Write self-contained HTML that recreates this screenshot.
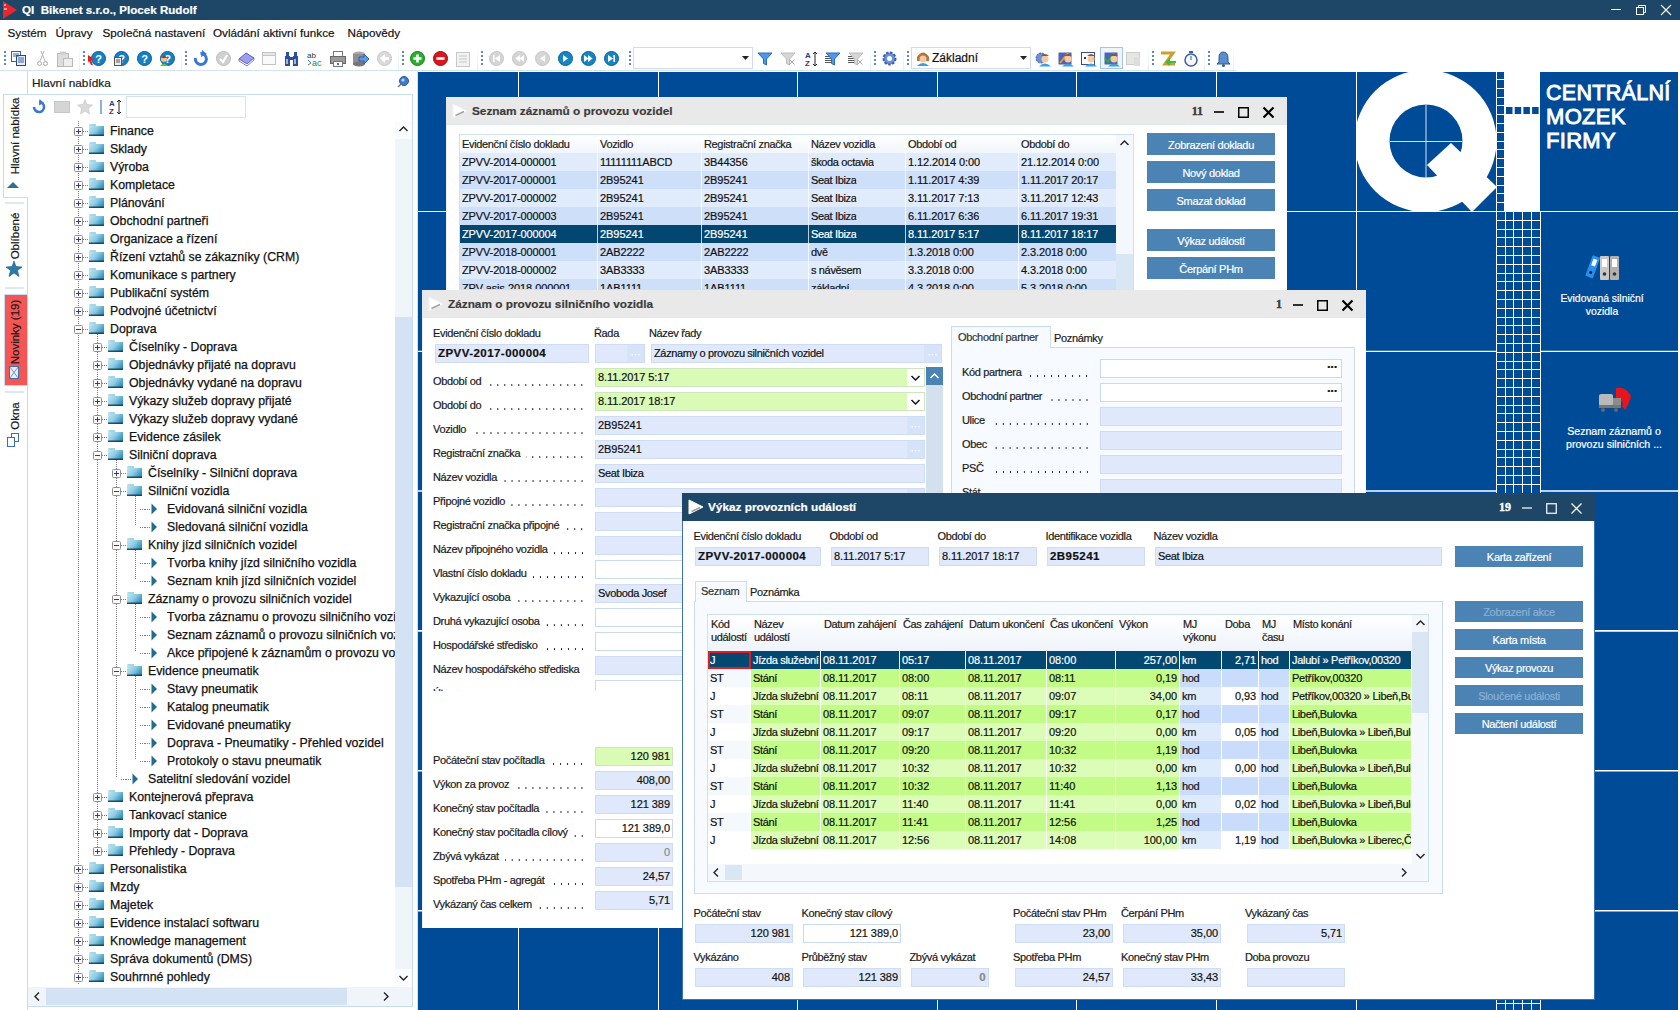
<!DOCTYPE html><html><head><meta charset="utf-8"><style>
*{box-sizing:border-box}
body{margin:0;width:1680px;height:1010px;position:relative;overflow:hidden;font-family:"Liberation Sans",sans-serif;background:#fff;color:#000;-webkit-text-stroke:0.2px currentColor}
.a{position:absolute}
.t{position:absolute;white-space:nowrap;line-height:14px}
.w{font-size:11px;letter-spacing:-0.35px;color:#1a1a1a}
svg{position:absolute;overflow:visible}
</style></head><body><div class="a" style="left:0px;top:0px;width:1680px;height:20px;background:#1e4667"></div>
<svg style="left:0;top:0" width="20" height="20"><path d="M3 1 L17 10 L3 19 Z" fill="#e8262c"/><path d="M4 5 h2 M4 9 h3" stroke="#fff" stroke-width="1"/></svg>
<div class="t" style="left:22px;top:3px;font-size:11.6px;font-weight:bold;color:#fff">QI&nbsp; Bikenet s.r.o., Plocek Rudolf</div>
<svg style="left:1600px;top:0" width="80" height="20"><path d="M11 9.5 h10" stroke="#fff" stroke-width="1"/><rect x="36.5" y="7.5" width="7" height="7" fill="none" stroke="#fff"/><path d="M38.5 7.5 v-2 h7 v7 h-2" fill="none" stroke="#fff"/><path d="M61 5 L71 15 M71 5 L61 15" stroke="#fff" stroke-width="1.1"/></svg>
<div class="t" style="left:7.5px;top:25.5px;font-size:11.7px;color:#111">Systém</div>
<div class="t" style="left:55.5px;top:25.5px;font-size:11.7px;color:#111">Úpravy</div>
<div class="t" style="left:102.5px;top:25.5px;font-size:11.7px;color:#111">Společná nastavení</div>
<div class="t" style="left:213px;top:25.5px;font-size:11.7px;color:#111">Ovládání aktivní funkce</div>
<div class="t" style="left:347.5px;top:25.5px;font-size:11.7px;color:#111">Nápovědy</div>
<div class="a" style="left:0px;top:70px;width:1236px;height:1px;background:#d3e2f5"></div>
<svg style="left:4px;top:51px" width="3" height="16"><rect x="0" y="0" width="2" height="2" fill="#5f86c1"/><rect x="0" y="4" width="2" height="2" fill="#5f86c1"/><rect x="0" y="8" width="2" height="2" fill="#5f86c1"/><rect x="0" y="12" width="2" height="2" fill="#5f86c1"/></svg>
<svg style="left:83px;top:51px" width="3" height="16"><rect x="0" y="0" width="2" height="2" fill="#5f86c1"/><rect x="0" y="4" width="2" height="2" fill="#5f86c1"/><rect x="0" y="8" width="2" height="2" fill="#5f86c1"/><rect x="0" y="12" width="2" height="2" fill="#5f86c1"/></svg>
<svg style="left:185px;top:51px" width="3" height="16"><rect x="0" y="0" width="2" height="2" fill="#5f86c1"/><rect x="0" y="4" width="2" height="2" fill="#5f86c1"/><rect x="0" y="8" width="2" height="2" fill="#5f86c1"/><rect x="0" y="12" width="2" height="2" fill="#5f86c1"/></svg>
<svg style="left:402px;top:51px" width="3" height="16"><rect x="0" y="0" width="2" height="2" fill="#5f86c1"/><rect x="0" y="4" width="2" height="2" fill="#5f86c1"/><rect x="0" y="8" width="2" height="2" fill="#5f86c1"/><rect x="0" y="12" width="2" height="2" fill="#5f86c1"/></svg>
<svg style="left:481px;top:51px" width="3" height="16"><rect x="0" y="0" width="2" height="2" fill="#5f86c1"/><rect x="0" y="4" width="2" height="2" fill="#5f86c1"/><rect x="0" y="8" width="2" height="2" fill="#5f86c1"/><rect x="0" y="12" width="2" height="2" fill="#5f86c1"/></svg>
<svg style="left:629px;top:51px" width="3" height="16"><rect x="0" y="0" width="2" height="2" fill="#5f86c1"/><rect x="0" y="4" width="2" height="2" fill="#5f86c1"/><rect x="0" y="8" width="2" height="2" fill="#5f86c1"/><rect x="0" y="12" width="2" height="2" fill="#5f86c1"/></svg>
<svg style="left:874px;top:51px" width="3" height="16"><rect x="0" y="0" width="2" height="2" fill="#5f86c1"/><rect x="0" y="4" width="2" height="2" fill="#5f86c1"/><rect x="0" y="8" width="2" height="2" fill="#5f86c1"/><rect x="0" y="12" width="2" height="2" fill="#5f86c1"/></svg>
<svg style="left:907px;top:51px" width="3" height="16"><rect x="0" y="0" width="2" height="2" fill="#5f86c1"/><rect x="0" y="4" width="2" height="2" fill="#5f86c1"/><rect x="0" y="8" width="2" height="2" fill="#5f86c1"/><rect x="0" y="12" width="2" height="2" fill="#5f86c1"/></svg>
<svg style="left:1152px;top:51px" width="3" height="16"><rect x="0" y="0" width="2" height="2" fill="#5f86c1"/><rect x="0" y="4" width="2" height="2" fill="#5f86c1"/><rect x="0" y="8" width="2" height="2" fill="#5f86c1"/><rect x="0" y="12" width="2" height="2" fill="#5f86c1"/></svg>
<svg style="left:1208px;top:51px" width="3" height="16"><rect x="0" y="0" width="2" height="2" fill="#5f86c1"/><rect x="0" y="4" width="2" height="2" fill="#5f86c1"/><rect x="0" y="8" width="2" height="2" fill="#5f86c1"/><rect x="0" y="12" width="2" height="2" fill="#5f86c1"/></svg>
<div class="a" style="left:79px;top:46px;width:1px;height:24px;background:linear-gradient(#fff,#e3ecf8)"></div>
<div class="a" style="left:181px;top:46px;width:1px;height:24px;background:linear-gradient(#fff,#e3ecf8)"></div>
<div class="a" style="left:398px;top:46px;width:1px;height:24px;background:linear-gradient(#fff,#e3ecf8)"></div>
<div class="a" style="left:477px;top:46px;width:1px;height:24px;background:linear-gradient(#fff,#e3ecf8)"></div>
<div class="a" style="left:625px;top:46px;width:1px;height:24px;background:linear-gradient(#fff,#e3ecf8)"></div>
<div class="a" style="left:870px;top:46px;width:1px;height:24px;background:linear-gradient(#fff,#e3ecf8)"></div>
<div class="a" style="left:903px;top:46px;width:1px;height:24px;background:linear-gradient(#fff,#e3ecf8)"></div>
<div class="a" style="left:1148px;top:46px;width:1px;height:24px;background:linear-gradient(#fff,#e3ecf8)"></div>
<div class="a" style="left:1204px;top:46px;width:1px;height:24px;background:linear-gradient(#fff,#e3ecf8)"></div>
<div class="a" style="left:1233px;top:46px;width:1px;height:24px;background:linear-gradient(#fff,#e3ecf8)"></div>
<svg style="left:11px;top:51px" width="16" height="16" viewBox="0 0 16 16"><rect x="0.5" y="0.5" width="9" height="10" fill="#fff" stroke="#3a5fa8"/><rect x="5.5" y="4.5" width="9" height="10" fill="#e8eefb" stroke="#23468f"/><path d="M7 7h6M7 9h6M7 11h6M2 3h6M2 5h6" stroke="#3a5fa8"/></svg>
<svg style="left:37px;top:51px" width="12" height="16" viewBox="0 0 12 16"><circle cx="2.5" cy="12.5" r="2" fill="none" stroke="#aaa"/><circle cx="8.5" cy="12.5" r="2" fill="none" stroke="#aaa"/><path d="M3 10 L7 0 M8 10 L4 0" stroke="#b5b5b5"/></svg>
<svg style="left:57px;top:51px" width="16" height="16" viewBox="0 0 16 16"><rect x="0.5" y="2.5" width="11" height="13" fill="#ddd" stroke="#bbb"/><rect x="3" y="0.5" width="6" height="3" fill="#ccc"/><rect x="6.5" y="7.5" width="9" height="8" fill="#eee" stroke="#bbb"/></svg>
<svg style="left:91px;top:51px" width="16" height="16" viewBox="0 0 16 16"><circle cx="7.5" cy="7.5" r="7" fill="#1580c4" stroke="#0d5b9a" stroke-width="1"/><text x="7.5" y="12" font-size="11" font-weight="bold" fill="#fff" text-anchor="middle" font-family="Liberation Sans">?</text></svg>
<svg style="left:114px;top:51px" width="16" height="16" viewBox="0 0 16 16"><circle cx="7.5" cy="7.5" r="7" fill="#1580c4" stroke="#0d5b9a" stroke-width="1"/><text x="7.5" y="12" font-size="11" font-weight="bold" fill="#fff" text-anchor="middle" font-family="Liberation Sans">?</text></svg>
<svg style="left:137px;top:51px" width="16" height="16" viewBox="0 0 16 16"><circle cx="7.5" cy="7.5" r="7" fill="#1580c4" stroke="#0d5b9a" stroke-width="1"/><text x="7.5" y="12" font-size="11" font-weight="bold" fill="#fff" text-anchor="middle" font-family="Liberation Sans">?</text></svg>
<svg style="left:160px;top:51px" width="16" height="16" viewBox="0 0 16 16"><circle cx="7.5" cy="7.5" r="7" fill="#1580c4" stroke="#0d5b9a" stroke-width="1"/><text x="7.5" y="12" font-size="11" font-weight="bold" fill="#fff" text-anchor="middle" font-family="Liberation Sans">?</text></svg>
<svg style="left:88px;top:51px" width="8" height="16" viewBox="0 0 8 16"><path d="M0 4 L6 8 L3 9 L5 14 L3 14 L1 10 L0 12Z" fill="#e0201b"/></svg>
<svg style="left:114px;top:51px" width="9" height="16" viewBox="0 0 9 16"><rect x="0.5" y="6.5" width="7" height="8" fill="#eee" stroke="#555"/><path d="M2 9h4M2 11h4" stroke="#555"/></svg>
<svg style="left:160px;top:51px" width="9" height="16" viewBox="0 0 9 16"><circle cx="4" cy="8" r="3" fill="#f3c08e"/><path d="M0 15 q4 -5 8 0z" fill="#4ec24a"/><path d="M1 7 q3 -5 6 0" fill="#7a4a22"/></svg>
<svg style="left:193px;top:51px" width="16" height="16" viewBox="0 0 16 16"><path d="M7.5 2.5 A5.5 5.5 0 1 1 2.5 7" fill="none" stroke="#3a78d4" stroke-width="3"/><path d="M9 -1 L14 3 L8 6Z" fill="#3a78d4"/></svg>
<svg style="left:216px;top:51px" width="16" height="16" viewBox="0 0 16 16"><circle cx="7.5" cy="7.5" r="7" fill="#d0d0d0" stroke="#bdbdbd" stroke-width="1"/><path d="M4 8 L7 11 L11 4" fill="none" stroke="#fff" stroke-width="2"/></svg>
<svg style="left:238px;top:51px" width="17" height="16" viewBox="0 0 17 16"><path d="M1 8 L8 2 L16 7 L9 13Z" fill="#9a9ef0" stroke="#5c60b8"/><path d="M1 8 L1 10 L9 15 L16 9 L16 7 L9 13Z" fill="#fff" stroke="#5c60b8" stroke-width="0.8"/></svg>
<svg style="left:262px;top:51px" width="16" height="16" viewBox="0 0 16 16"><rect x="0.5" y="1.5" width="13" height="12" fill="#fafafa" stroke="#c4c4c4"/><rect x="0.5" y="1.5" width="13" height="3" fill="#e6e6e6" stroke="#c4c4c4"/></svg>
<svg style="left:284px;top:51px" width="16" height="16" viewBox="0 0 16 16"><rect x="1" y="5" width="5" height="10" fill="#2b4f9e"/><rect x="9" y="5" width="5" height="10" fill="#2b4f9e"/><rect x="2" y="1" width="3" height="5" fill="#2b4f9e"/><rect x="10" y="1" width="3" height="5" fill="#2b4f9e"/><rect x="5" y="6" width="5" height="3" fill="#2b4f9e"/><rect x="2" y="8" width="2" height="5" fill="#9fb6e4"/><rect x="10" y="8" width="2" height="5" fill="#9fb6e4"/></svg>
<svg style="left:307px;top:51px" width="17" height="16" viewBox="0 0 17 16"><text x="0" y="7" font-size="8" fill="#333" font-family="Liberation Sans">ab</text><text x="5" y="15" font-size="9" fill="#2a8a2a" font-family="Liberation Sans">ac</text><path d="M1 9 L4 12 L1 14" fill="none" stroke="#3a78d4"/></svg>
<svg style="left:330px;top:51px" width="16" height="16" viewBox="0 0 16 16"><rect x="3.5" y="0.5" width="9" height="5" fill="#fff" stroke="#777"/><rect x="0.5" y="5.5" width="15" height="7" fill="#9a9a9a" stroke="#666"/><rect x="3.5" y="10.5" width="9" height="5" fill="#fff" stroke="#777"/><rect x="7" y="12" width="2" height="2" fill="#3a78d4"/></svg>
<svg style="left:353px;top:51px" width="17" height="16" viewBox="0 0 17 16"><ellipse cx="6" cy="3" rx="6" ry="2.5" fill="#aaa"/><rect x="0" y="3" width="12" height="10" fill="#8f8f8f"/><ellipse cx="6" cy="13" rx="6" ry="2.5" fill="#777"/><path d="M6 6 h5 v-3 l5 5 l-5 5 v-3 h-5z" fill="#5d9ae8" stroke="#2c5fb0"/></svg>
<svg style="left:377px;top:51px" width="16" height="16" viewBox="0 0 16 16"><circle cx="7.5" cy="7.5" r="7" fill="#dadada" stroke="#c8c8c8" stroke-width="1"/><path d="M3 7.5 L8 3 V6 H12 V9 H8 V12Z" fill="#fff"/></svg>
<svg style="left:410px;top:51px" width="16" height="16" viewBox="0 0 16 16"><circle cx="7.5" cy="7.5" r="7" fill="#27b12c" stroke="#12801a" stroke-width="1"/><path d="M7.5 3.5v8M3.5 7.5h8" stroke="#fff" stroke-width="2.6"/></svg>
<svg style="left:433px;top:51px" width="16" height="16" viewBox="0 0 16 16"><circle cx="7.5" cy="7.5" r="7" fill="#d8161b" stroke="#9b0d10" stroke-width="1"/><path d="M3.5 7.5h8" stroke="#fff" stroke-width="2.6"/></svg>
<svg style="left:455px;top:51px" width="16" height="16" viewBox="0 0 16 16"><rect x="1.5" y="1.5" width="13" height="14" fill="#f2f2f2" stroke="#c8c8c8"/><path d="M4 5h8M4 8h8M4 11h8" stroke="#c8c8c8"/></svg>
<svg style="left:489px;top:51px" width="16" height="16" viewBox="0 0 16 16"><circle cx="7.5" cy="7.5" r="7" fill="#d5d5d5" stroke="#c6c6c6" stroke-width="1"/><rect x="4" y="4" width="1.6" height="7" fill="#fff"/><path d="M11 4 L6 7.5 L11 11Z" fill="#fff"/></svg>
<svg style="left:512px;top:51px" width="16" height="16" viewBox="0 0 16 16"><circle cx="7.5" cy="7.5" r="7" fill="#d5d5d5" stroke="#c6c6c6" stroke-width="1"/><path d="M8 4 L3.5 7.5 L8 11Z M12 4 L7.5 7.5 L12 11Z" fill="#fff"/></svg>
<svg style="left:535px;top:51px" width="16" height="16" viewBox="0 0 16 16"><circle cx="7.5" cy="7.5" r="7" fill="#d5d5d5" stroke="#c6c6c6" stroke-width="1"/><path d="M10 4 L5 7.5 L10 11Z" fill="#fff"/></svg>
<svg style="left:558px;top:51px" width="16" height="16" viewBox="0 0 16 16"><circle cx="7.5" cy="7.5" r="7" fill="#1486c6" stroke="#0b5d97" stroke-width="1"/><path d="M5 4 L10 7.5 L5 11Z" fill="#fff"/></svg>
<svg style="left:581px;top:51px" width="16" height="16" viewBox="0 0 16 16"><circle cx="7.5" cy="7.5" r="7" fill="#1486c6" stroke="#0b5d97" stroke-width="1"/><path d="M3 4 L7.5 7.5 L3 11Z M7 4 L11.5 7.5 L7 11Z" fill="#fff"/></svg>
<svg style="left:604px;top:51px" width="16" height="16" viewBox="0 0 16 16"><circle cx="7.5" cy="7.5" r="7" fill="#1486c6" stroke="#0b5d97" stroke-width="1"/><path d="M4 4 L9 7.5 L4 11Z" fill="#fff"/><rect x="9.4" y="4" width="1.6" height="7" fill="#fff"/></svg>
<div class="a" style="left:633px;top:47px;width:120px;height:22px;border:1px solid #cfdcef;background:#fff"></div>
<svg style="left:742px;top:56px" width="8" height="5" viewBox="0 0 8 5"><path d="M0 0 h7 l-3.5 4z" fill="#222"/></svg>
<svg style="left:757px;top:51px" width="16" height="16" viewBox="0 0 16 16"><path d="M1 2 H15 L9.5 8 V14 L6.5 12.5 V8Z" fill="#4f97e6" stroke="#2a6cc0"/></svg>
<svg style="left:780px;top:51px" width="16" height="16" viewBox="0 0 16 16"><path d="M1 2 H15 L9.5 8 V14 L6.5 12.5 V8Z" fill="#d6d6d6" stroke="#bbb"/></svg>
<svg style="left:789px;top:59px" width="7" height="7" viewBox="0 0 7 7"><path d="M0.5 0.5 L5.5 5.5 M5.5 0.5 L0.5 5.5" stroke="#aaa"/></svg>
<svg style="left:805px;top:51px" width="13" height="16" viewBox="0 0 13 16"><text x="0" y="7" font-size="8" font-weight="bold" fill="#1c3f8e" font-family="Liberation Sans">A</text><text x="0" y="15" font-size="8" font-weight="bold" fill="#8b1a1a" font-family="Liberation Sans">Z</text><path d="M10 1 v14 M8 3 l2 -2 l2 2 M8 13 l2 2 l2 -2" fill="none" stroke="#222"/></svg>
<svg style="left:825px;top:51px" width="16" height="16" viewBox="0 0 16 16"><path d="M0 5.5h6M0 7.5h6M0 9.5h6M0 11.5h6" stroke="#555"/><path d="M1 2 H15 L9.5 8 V14 L6.5 12.5 V8Z" fill="#4f97e6" stroke="#2a6cc0"/></svg>
<svg style="left:848px;top:51px" width="16" height="16" viewBox="0 0 16 16"><path d="M0 5.5h6M0 7.5h6M0 9.5h6M0 11.5h6" stroke="#555"/><path d="M1 2 H15 L9.5 8 V14 L6.5 12.5 V8Z" fill="#d6d6d6" stroke="#bbb"/></svg>
<svg style="left:857px;top:59px" width="7" height="7" viewBox="0 0 7 7"><path d="M0.5 0.5 L5.5 5.5 M5.5 0.5 L0.5 5.5" stroke="#aaa"/></svg>
<svg style="left:882px;top:51px" width="16" height="16" viewBox="0 0 16 16"><circle cx="7.5" cy="7.5" r="6" fill="#6b8fd8" stroke="#3a5fa8" stroke-width="2" stroke-dasharray="2.5 1.5"/><circle cx="7.5" cy="7.5" r="2.5" fill="#fff"/></svg>
<div class="a" style="left:911px;top:47px;width:120px;height:22px;border:1px solid #cfdcef;background:#fff"></div>
<svg style="left:915px;top:51px" width="16" height="16" viewBox="0 0 16 16"><path d="M2 6 q6 -9 12 0 v4 h-12z" fill="#b0743d"/><circle cx="8" cy="8" r="3.5" fill="#f6c99c"/><path d="M2 15 q6 -6 12 0z" fill="#3aa0e0"/></svg>
<div class="t" style="left:932px;top:51px;font-size:12px;color:#111">Základní</div>
<svg style="left:1020px;top:56px" width="8" height="5" viewBox="0 0 8 5"><path d="M0 0 h7 l-3.5 4z" fill="#222"/></svg>
<svg style="left:1035px;top:51px" width="17" height="16" viewBox="0 0 17 16"><circle cx="6" cy="7" r="5" fill="#6b8fd8" stroke="#3a5fa8" stroke-dasharray="2 1"/><circle cx="10" cy="8" r="3.5" fill="#f6c99c"/><path d="M6 5 q4 -4 8 0" fill="#8a5a2a"/><path d="M4 15.5 q6 -6 12 0z" fill="#3aa0e0"/></svg>
<svg style="left:1058px;top:51px" width="17" height="16" viewBox="0 0 17 16"><rect x="0.5" y="1.5" width="13" height="12" fill="#5060c0"/><path d="M2 12 L10 2" stroke="#e0a020" stroke-width="2"/><circle cx="10" cy="8" r="3.5" fill="#f6c99c"/><path d="M6 5 q4 -4 8 0" fill="#8a5a2a"/><path d="M4 15.5 q6 -6 12 0z" fill="#3aa0e0"/></svg>
<svg style="left:1081px;top:51px" width="17" height="16" viewBox="0 0 17 16"><rect x="0.5" y="1.5" width="13" height="12" fill="#fff" stroke="#3a4a9a"/><rect x="3" y="6" width="2" height="2" fill="#333"/><circle cx="10" cy="8" r="3.5" fill="#f6c99c"/><path d="M6 5 q4 -4 8 0" fill="#8a5a2a"/><path d="M4 15.5 q6 -6 12 0z" fill="#3aa0e0"/></svg>
<div class="a" style="left:1100px;top:47px;width:23px;height:22px;border:1px solid #a6c3e8;background:#eef4fc"></div>
<svg style="left:1104px;top:51px" width="17" height="16" viewBox="0 0 17 16"><rect x="0.5" y="1.5" width="13" height="12" fill="#5060c0"/><path d="M1 7 L4 11 L10 2" fill="none" stroke="#2ab02a" stroke-width="2"/><circle cx="10" cy="8" r="3.5" fill="#f6c99c"/><path d="M6 5 q4 -4 8 0" fill="#8a5a2a"/><path d="M4 15.5 q6 -6 12 0z" fill="#3aa0e0"/></svg>
<svg style="left:1126px;top:51px" width="16" height="16" viewBox="0 0 16 16"><rect x="0.5" y="1.5" width="13" height="12" fill="#e6e6e6" stroke="#ccc"/><rect x="8" y="6" width="6" height="9" fill="#ddd"/></svg>
<svg style="left:1160px;top:51px" width="17" height="16" viewBox="0 0 17 16"><path d="M1 2 H13 L5 13 H15" fill="none" stroke="#c8a030" stroke-width="3"/><path d="M16 10 H10 V7 L5 11 L10 15 V12 H16Z" fill="#3cbf3c"/></svg>
<svg style="left:1184px;top:51px" width="14" height="16" viewBox="0 0 14 16"><circle cx="7" cy="9" r="6" fill="#f6f8fc" stroke="#3a5fa8" stroke-width="1.5"/><rect x="5" y="0" width="4" height="2" fill="#3a5fa8"/><path d="M7 9 V5" stroke="#3a5fa8"/></svg>
<svg style="left:1217px;top:51px" width="14" height="16" viewBox="0 0 14 16"><path d="M6 1 q5 0 5 6 v4 l2 2 h-13 l2 -2 v-4 q0 -6 4 -6z" fill="#5b8ccc" stroke="#2d5b9a"/><circle cx="6.5" cy="14.5" r="1.5" fill="#2d5b9a"/></svg>
<div class="a" style="left:27px;top:71px;width:1px;height:939px;background:#c9dbf3"></div>
<div class="a" style="left:3px;top:94px;width:25px;height:104px;background:#fff;border:1px solid #c9dbf3;border-right:none"></div>
<div class="t" style="left:15px;top:136px;transform:translate(-50%,-50%) rotate(-90deg);font-size:11.5px;color:#1a1a1a">Hlavní nabídka</div>
<svg style="left:7px;top:182px" width="13" height="6"><path d="M0 6 L6 0 L12 6Z" fill="#2d6f8e"/></svg>
<div class="a" style="left:5px;top:202px;width:19px;height:2px;background:#dde8f6"></div>
<div class="t" style="left:15px;top:236px;transform:translate(-50%,-50%) rotate(-90deg);font-size:11.5px;color:#1a1a1a">Oblíbené</div>
<svg style="left:6px;top:261px" width="16" height="16"><path d="M8 0 L10 5.5 L16 6 L11.5 9.5 L13 15.5 L8 12 L3 15.5 L4.5 9.5 L0 6 L6 5.5Z" fill="#2d7aa8" stroke="#1d5a80" stroke-width="0.6"/></svg>
<div class="a" style="left:5px;top:287px;width:19px;height:2px;background:#dde8f6"></div>
<div class="a" style="left:4px;top:294px;width:23px;height:92px;background:#f45656;border:1px solid #c9dbf3;border-right:none"></div>
<div class="t" style="left:15px;top:332px;transform:translate(-50%,-50%) rotate(-90deg);font-size:11.5px;color:#1a1a1a">Novinky (19)</div>
<svg style="left:9px;top:366px" width="10" height="13"><rect x="0.5" y="0.5" width="9" height="12" fill="#e8eef8" stroke="#4070b0"/><path d="M0.5 0.5 L5 6.5 L9.5 0.5 M0.5 12.5 L5 6.5 L9.5 12.5" fill="none" stroke="#4070b0" stroke-width="0.7"/></svg>
<div class="a" style="left:5px;top:391px;width:19px;height:2px;background:#dde8f6"></div>
<div class="t" style="left:15px;top:416px;transform:translate(-50%,-50%) rotate(-90deg);font-size:11.5px;color:#1a1a1a">Okna</div>
<svg style="left:7px;top:433px" width="13" height="14"><rect x="4.5" y="0.5" width="7" height="8" fill="#fff" stroke="#3e6eb2"/><rect x="0.5" y="4.5" width="7" height="9" fill="#fff" stroke="#3e6eb2"/></svg>
<div class="a" style="left:28px;top:71px;width:389px;height:939px;background:#fff"></div>
<div class="a" style="left:27px;top:94px;width:386px;height:1px;background:#c9dbf3"></div>
<div class="a" style="left:412px;top:94px;width:1px;height:913px;background:#c9dbf3"></div>
<div class="a" style="left:27px;top:1006px;width:386px;height:1px;background:#c9dbf3"></div>
<div class="t" style="left:32px;top:76px;font-size:11.8px;color:#1a1a1a">Hlavní nabídka</div>
<svg style="left:396px;top:75px" width="14" height="14"><circle cx="8" cy="6" r="4.5" fill="#3d7cc9" stroke="#27579a"/><circle cx="7" cy="5" r="1.6" fill="#bcd6f5"/><path d="M5 9 L2 12" stroke="#777" stroke-width="1.5"/></svg>
<svg style="left:32px;top:100px" width="14" height="14"><path d="M7 2 A5 5 0 1 1 2 7" fill="none" stroke="#3a78d4" stroke-width="2.6"/><path d="M7.5 -1 L12 3 L7 5.5Z" fill="#3a78d4"/></svg>
<div class="a" style="left:54px;top:101px;width:16px;height:12px;background:#d5d5d5;border:1px solid #c8c8c8"></div>
<svg style="left:77px;top:99px" width="16" height="16"><path d="M8 0.5 L10 5.5 L15.5 6 L11.5 9.5 L12.5 15 L8 12 L3.5 15 L4.5 9.5 L0.5 6 L6 5.5Z" fill="#dadada" stroke="#c4c4c4" stroke-width="0.6"/></svg>
<div class="a" style="left:100px;top:100px;width:2px;height:14px;background:#8fb0d8"></div>
<svg style="left:109px;top:99px" width="14" height="16"><text x="0" y="7" font-size="8" font-weight="bold" fill="#1c3f8e" font-family="Liberation Sans">A</text><text x="0" y="15" font-size="8" font-weight="bold" fill="#8b1a1a" font-family="Liberation Sans">Z</text><path d="M10 1 v14 M8 3 l2 -2 l2 2 M8 13 l2 2 l2 -2" fill="none" stroke="#222"/></svg>
<div class="a" style="left:126px;top:96px;width:120px;height:22px;border:1px solid #d7e3f3;background:#fff"></div>
<div class="a" style="left:0;top:121px;width:395px;height:864px;overflow:hidden"><svg style="left:0;top:0" width="395" height="864"><defs><linearGradient id="fg" x1="0" y1="0" x2="1" y2="0.7"><stop offset="0" stop-color="#cdebf5"/><stop offset="0.55" stop-color="#8ccbe3"/><stop offset="1" stop-color="#2e8dbb"/></linearGradient></defs><path d="M97.5 213 V729" stroke="#7a7a7a" stroke-dasharray="1 1"/><path d="M116.5 339 V657" stroke="#7a7a7a" stroke-dasharray="1 1"/><path d="M135.5 375 V405" stroke="#7a7a7a" stroke-dasharray="1 1"/><path d="M135.5 429 V459" stroke="#7a7a7a" stroke-dasharray="1 1"/><path d="M135.5 483 V531" stroke="#7a7a7a" stroke-dasharray="1 1"/><path d="M135.5 555 V639" stroke="#7a7a7a" stroke-dasharray="1 1"/><path d="M78.5 0 V873.5" stroke="#7a7a7a" stroke-dasharray="1 1"/><path d="M83 10.5 H89" stroke="#7a7a7a" stroke-dasharray="1 1"/><rect x="74.5" y="6.5" width="8" height="8" rx="1" fill="#fafafa" stroke="#8f8f8f"/><path d="M76 10.5 H81" stroke="#2a3f8a"/><path d="M78.5 8.0 V13.0" stroke="#2a3f8a"/><path d="M89 3.0 h7 v2 h8 v10 h-15z" fill="url(#fg)"/><path d="M90 4.0 h5" stroke="#8fd0e6" stroke-width="1"/><rect x="89" y="13.5" width="15" height="1.5" fill="#0e3a52" opacity="0.85"/><text x="110" y="14.0" font-size="12.3" fill="#111" stroke="#111" stroke-width="0.25" font-family="Liberation Sans">Finance</text><path d="M83 28.5 H89" stroke="#7a7a7a" stroke-dasharray="1 1"/><rect x="74.5" y="24.5" width="8" height="8" rx="1" fill="#fafafa" stroke="#8f8f8f"/><path d="M76 28.5 H81" stroke="#2a3f8a"/><path d="M78.5 26.0 V31.0" stroke="#2a3f8a"/><path d="M89 21.0 h7 v2 h8 v10 h-15z" fill="url(#fg)"/><path d="M90 22.0 h5" stroke="#8fd0e6" stroke-width="1"/><rect x="89" y="31.5" width="15" height="1.5" fill="#0e3a52" opacity="0.85"/><text x="110" y="32.0" font-size="12.3" fill="#111" stroke="#111" stroke-width="0.25" font-family="Liberation Sans">Sklady</text><path d="M83 46.5 H89" stroke="#7a7a7a" stroke-dasharray="1 1"/><rect x="74.5" y="42.5" width="8" height="8" rx="1" fill="#fafafa" stroke="#8f8f8f"/><path d="M76 46.5 H81" stroke="#2a3f8a"/><path d="M78.5 44.0 V49.0" stroke="#2a3f8a"/><path d="M89 39.0 h7 v2 h8 v10 h-15z" fill="url(#fg)"/><path d="M90 40.0 h5" stroke="#8fd0e6" stroke-width="1"/><rect x="89" y="49.5" width="15" height="1.5" fill="#0e3a52" opacity="0.85"/><text x="110" y="50.0" font-size="12.3" fill="#111" stroke="#111" stroke-width="0.25" font-family="Liberation Sans">Výroba</text><path d="M83 64.5 H89" stroke="#7a7a7a" stroke-dasharray="1 1"/><rect x="74.5" y="60.5" width="8" height="8" rx="1" fill="#fafafa" stroke="#8f8f8f"/><path d="M76 64.5 H81" stroke="#2a3f8a"/><path d="M78.5 62.0 V67.0" stroke="#2a3f8a"/><path d="M89 57.0 h7 v2 h8 v10 h-15z" fill="url(#fg)"/><path d="M90 58.0 h5" stroke="#8fd0e6" stroke-width="1"/><rect x="89" y="67.5" width="15" height="1.5" fill="#0e3a52" opacity="0.85"/><text x="110" y="68.0" font-size="12.3" fill="#111" stroke="#111" stroke-width="0.25" font-family="Liberation Sans">Kompletace</text><path d="M83 82.5 H89" stroke="#7a7a7a" stroke-dasharray="1 1"/><rect x="74.5" y="78.5" width="8" height="8" rx="1" fill="#fafafa" stroke="#8f8f8f"/><path d="M76 82.5 H81" stroke="#2a3f8a"/><path d="M78.5 80.0 V85.0" stroke="#2a3f8a"/><path d="M89 75.0 h7 v2 h8 v10 h-15z" fill="url(#fg)"/><path d="M90 76.0 h5" stroke="#8fd0e6" stroke-width="1"/><rect x="89" y="85.5" width="15" height="1.5" fill="#0e3a52" opacity="0.85"/><text x="110" y="86.0" font-size="12.3" fill="#111" stroke="#111" stroke-width="0.25" font-family="Liberation Sans">Plánování</text><path d="M83 100.5 H89" stroke="#7a7a7a" stroke-dasharray="1 1"/><rect x="74.5" y="96.5" width="8" height="8" rx="1" fill="#fafafa" stroke="#8f8f8f"/><path d="M76 100.5 H81" stroke="#2a3f8a"/><path d="M78.5 98.0 V103.0" stroke="#2a3f8a"/><path d="M89 93.0 h7 v2 h8 v10 h-15z" fill="url(#fg)"/><path d="M90 94.0 h5" stroke="#8fd0e6" stroke-width="1"/><rect x="89" y="103.5" width="15" height="1.5" fill="#0e3a52" opacity="0.85"/><text x="110" y="104.0" font-size="12.3" fill="#111" stroke="#111" stroke-width="0.25" font-family="Liberation Sans">Obchodní partneři</text><path d="M83 118.5 H89" stroke="#7a7a7a" stroke-dasharray="1 1"/><rect x="74.5" y="114.5" width="8" height="8" rx="1" fill="#fafafa" stroke="#8f8f8f"/><path d="M76 118.5 H81" stroke="#2a3f8a"/><path d="M78.5 116.0 V121.0" stroke="#2a3f8a"/><path d="M89 111.0 h7 v2 h8 v10 h-15z" fill="url(#fg)"/><path d="M90 112.0 h5" stroke="#8fd0e6" stroke-width="1"/><rect x="89" y="121.5" width="15" height="1.5" fill="#0e3a52" opacity="0.85"/><text x="110" y="122.0" font-size="12.3" fill="#111" stroke="#111" stroke-width="0.25" font-family="Liberation Sans">Organizace a řízení</text><path d="M83 136.5 H89" stroke="#7a7a7a" stroke-dasharray="1 1"/><rect x="74.5" y="132.5" width="8" height="8" rx="1" fill="#fafafa" stroke="#8f8f8f"/><path d="M76 136.5 H81" stroke="#2a3f8a"/><path d="M78.5 134.0 V139.0" stroke="#2a3f8a"/><path d="M89 129.0 h7 v2 h8 v10 h-15z" fill="url(#fg)"/><path d="M90 130.0 h5" stroke="#8fd0e6" stroke-width="1"/><rect x="89" y="139.5" width="15" height="1.5" fill="#0e3a52" opacity="0.85"/><text x="110" y="140.0" font-size="12.3" fill="#111" stroke="#111" stroke-width="0.25" font-family="Liberation Sans">Řízení vztahů se zákazníky (CRM)</text><path d="M83 154.5 H89" stroke="#7a7a7a" stroke-dasharray="1 1"/><rect x="74.5" y="150.5" width="8" height="8" rx="1" fill="#fafafa" stroke="#8f8f8f"/><path d="M76 154.5 H81" stroke="#2a3f8a"/><path d="M78.5 152.0 V157.0" stroke="#2a3f8a"/><path d="M89 147.0 h7 v2 h8 v10 h-15z" fill="url(#fg)"/><path d="M90 148.0 h5" stroke="#8fd0e6" stroke-width="1"/><rect x="89" y="157.5" width="15" height="1.5" fill="#0e3a52" opacity="0.85"/><text x="110" y="158.0" font-size="12.3" fill="#111" stroke="#111" stroke-width="0.25" font-family="Liberation Sans">Komunikace s partnery</text><path d="M83 172.5 H89" stroke="#7a7a7a" stroke-dasharray="1 1"/><rect x="74.5" y="168.5" width="8" height="8" rx="1" fill="#fafafa" stroke="#8f8f8f"/><path d="M76 172.5 H81" stroke="#2a3f8a"/><path d="M78.5 170.0 V175.0" stroke="#2a3f8a"/><path d="M89 165.0 h7 v2 h8 v10 h-15z" fill="url(#fg)"/><path d="M90 166.0 h5" stroke="#8fd0e6" stroke-width="1"/><rect x="89" y="175.5" width="15" height="1.5" fill="#0e3a52" opacity="0.85"/><text x="110" y="176.0" font-size="12.3" fill="#111" stroke="#111" stroke-width="0.25" font-family="Liberation Sans">Publikační systém</text><path d="M83 190.5 H89" stroke="#7a7a7a" stroke-dasharray="1 1"/><rect x="74.5" y="186.5" width="8" height="8" rx="1" fill="#fafafa" stroke="#8f8f8f"/><path d="M76 190.5 H81" stroke="#2a3f8a"/><path d="M78.5 188.0 V193.0" stroke="#2a3f8a"/><path d="M89 183.0 h7 v2 h8 v10 h-15z" fill="url(#fg)"/><path d="M90 184.0 h5" stroke="#8fd0e6" stroke-width="1"/><rect x="89" y="193.5" width="15" height="1.5" fill="#0e3a52" opacity="0.85"/><text x="110" y="194.0" font-size="12.3" fill="#111" stroke="#111" stroke-width="0.25" font-family="Liberation Sans">Podvojné účetnictví</text><path d="M83 208.5 H89" stroke="#7a7a7a" stroke-dasharray="1 1"/><rect x="74.5" y="204.5" width="8" height="8" rx="1" fill="#fafafa" stroke="#8f8f8f"/><path d="M76 208.5 H81" stroke="#2a3f8a"/><path d="M89 201.0 h7 v2 h8 v10 h-15z" fill="url(#fg)"/><path d="M90 202.0 h5" stroke="#8fd0e6" stroke-width="1"/><rect x="89" y="211.5" width="15" height="1.5" fill="#0e3a52" opacity="0.85"/><text x="110" y="212.0" font-size="12.3" fill="#111" stroke="#111" stroke-width="0.25" font-family="Liberation Sans">Doprava</text><path d="M102 226.5 H108" stroke="#7a7a7a" stroke-dasharray="1 1"/><rect x="93.5" y="222.5" width="8" height="8" rx="1" fill="#fafafa" stroke="#8f8f8f"/><path d="M95 226.5 H100" stroke="#2a3f8a"/><path d="M97.5 224.0 V229.0" stroke="#2a3f8a"/><path d="M108 219.0 h7 v2 h8 v10 h-15z" fill="url(#fg)"/><path d="M109 220.0 h5" stroke="#8fd0e6" stroke-width="1"/><rect x="108" y="229.5" width="15" height="1.5" fill="#0e3a52" opacity="0.85"/><text x="129" y="230.0" font-size="12.3" fill="#111" stroke="#111" stroke-width="0.25" font-family="Liberation Sans">Číselníky - Doprava</text><path d="M102 244.5 H108" stroke="#7a7a7a" stroke-dasharray="1 1"/><rect x="93.5" y="240.5" width="8" height="8" rx="1" fill="#fafafa" stroke="#8f8f8f"/><path d="M95 244.5 H100" stroke="#2a3f8a"/><path d="M97.5 242.0 V247.0" stroke="#2a3f8a"/><path d="M108 237.0 h7 v2 h8 v10 h-15z" fill="url(#fg)"/><path d="M109 238.0 h5" stroke="#8fd0e6" stroke-width="1"/><rect x="108" y="247.5" width="15" height="1.5" fill="#0e3a52" opacity="0.85"/><text x="129" y="248.0" font-size="12.3" fill="#111" stroke="#111" stroke-width="0.25" font-family="Liberation Sans">Objednávky přijaté na dopravu</text><path d="M102 262.5 H108" stroke="#7a7a7a" stroke-dasharray="1 1"/><rect x="93.5" y="258.5" width="8" height="8" rx="1" fill="#fafafa" stroke="#8f8f8f"/><path d="M95 262.5 H100" stroke="#2a3f8a"/><path d="M97.5 260.0 V265.0" stroke="#2a3f8a"/><path d="M108 255.0 h7 v2 h8 v10 h-15z" fill="url(#fg)"/><path d="M109 256.0 h5" stroke="#8fd0e6" stroke-width="1"/><rect x="108" y="265.5" width="15" height="1.5" fill="#0e3a52" opacity="0.85"/><text x="129" y="266.0" font-size="12.3" fill="#111" stroke="#111" stroke-width="0.25" font-family="Liberation Sans">Objednávky vydané na dopravu</text><path d="M102 280.5 H108" stroke="#7a7a7a" stroke-dasharray="1 1"/><rect x="93.5" y="276.5" width="8" height="8" rx="1" fill="#fafafa" stroke="#8f8f8f"/><path d="M95 280.5 H100" stroke="#2a3f8a"/><path d="M97.5 278.0 V283.0" stroke="#2a3f8a"/><path d="M108 273.0 h7 v2 h8 v10 h-15z" fill="url(#fg)"/><path d="M109 274.0 h5" stroke="#8fd0e6" stroke-width="1"/><rect x="108" y="283.5" width="15" height="1.5" fill="#0e3a52" opacity="0.85"/><text x="129" y="284.0" font-size="12.3" fill="#111" stroke="#111" stroke-width="0.25" font-family="Liberation Sans">Výkazy služeb dopravy přijaté</text><path d="M102 298.5 H108" stroke="#7a7a7a" stroke-dasharray="1 1"/><rect x="93.5" y="294.5" width="8" height="8" rx="1" fill="#fafafa" stroke="#8f8f8f"/><path d="M95 298.5 H100" stroke="#2a3f8a"/><path d="M97.5 296.0 V301.0" stroke="#2a3f8a"/><path d="M108 291.0 h7 v2 h8 v10 h-15z" fill="url(#fg)"/><path d="M109 292.0 h5" stroke="#8fd0e6" stroke-width="1"/><rect x="108" y="301.5" width="15" height="1.5" fill="#0e3a52" opacity="0.85"/><text x="129" y="302.0" font-size="12.3" fill="#111" stroke="#111" stroke-width="0.25" font-family="Liberation Sans">Výkazy služeb dopravy vydané</text><path d="M102 316.5 H108" stroke="#7a7a7a" stroke-dasharray="1 1"/><rect x="93.5" y="312.5" width="8" height="8" rx="1" fill="#fafafa" stroke="#8f8f8f"/><path d="M95 316.5 H100" stroke="#2a3f8a"/><path d="M97.5 314.0 V319.0" stroke="#2a3f8a"/><path d="M108 309.0 h7 v2 h8 v10 h-15z" fill="url(#fg)"/><path d="M109 310.0 h5" stroke="#8fd0e6" stroke-width="1"/><rect x="108" y="319.5" width="15" height="1.5" fill="#0e3a52" opacity="0.85"/><text x="129" y="320.0" font-size="12.3" fill="#111" stroke="#111" stroke-width="0.25" font-family="Liberation Sans">Evidence zásilek</text><path d="M102 334.5 H108" stroke="#7a7a7a" stroke-dasharray="1 1"/><rect x="93.5" y="330.5" width="8" height="8" rx="1" fill="#fafafa" stroke="#8f8f8f"/><path d="M95 334.5 H100" stroke="#2a3f8a"/><path d="M108 327.0 h7 v2 h8 v10 h-15z" fill="url(#fg)"/><path d="M109 328.0 h5" stroke="#8fd0e6" stroke-width="1"/><rect x="108" y="337.5" width="15" height="1.5" fill="#0e3a52" opacity="0.85"/><text x="129" y="338.0" font-size="12.3" fill="#111" stroke="#111" stroke-width="0.25" font-family="Liberation Sans">Silniční doprava</text><path d="M121 352.5 H127" stroke="#7a7a7a" stroke-dasharray="1 1"/><rect x="112.5" y="348.5" width="8" height="8" rx="1" fill="#fafafa" stroke="#8f8f8f"/><path d="M114 352.5 H119" stroke="#2a3f8a"/><path d="M116.5 350.0 V355.0" stroke="#2a3f8a"/><path d="M127 345.0 h7 v2 h8 v10 h-15z" fill="url(#fg)"/><path d="M128 346.0 h5" stroke="#8fd0e6" stroke-width="1"/><rect x="127" y="355.5" width="15" height="1.5" fill="#0e3a52" opacity="0.85"/><text x="148" y="356.0" font-size="12.3" fill="#111" stroke="#111" stroke-width="0.25" font-family="Liberation Sans">Číselníky - Silniční doprava</text><path d="M121 370.5 H127" stroke="#7a7a7a" stroke-dasharray="1 1"/><rect x="112.5" y="366.5" width="8" height="8" rx="1" fill="#fafafa" stroke="#8f8f8f"/><path d="M114 370.5 H119" stroke="#2a3f8a"/><path d="M127 363.0 h7 v2 h8 v10 h-15z" fill="url(#fg)"/><path d="M128 364.0 h5" stroke="#8fd0e6" stroke-width="1"/><rect x="127" y="373.5" width="15" height="1.5" fill="#0e3a52" opacity="0.85"/><text x="148" y="374.0" font-size="12.3" fill="#111" stroke="#111" stroke-width="0.25" font-family="Liberation Sans">Silniční vozidla</text><path d="M140 388.5 H146" stroke="#7a7a7a" stroke-dasharray="1 1"/><path d="M145 388.5 H150" stroke="#7a7a7a" stroke-dasharray="1 1"/><path d="M151.5 382.5 L157 388.0 L151.5 393.5Z" fill="#1f6e8e"/><text x="167" y="392.0" font-size="12.3" fill="#111" stroke="#111" stroke-width="0.25" font-family="Liberation Sans">Evidovaná silniční vozidla</text><path d="M140 406.5 H146" stroke="#7a7a7a" stroke-dasharray="1 1"/><path d="M145 406.5 H150" stroke="#7a7a7a" stroke-dasharray="1 1"/><path d="M151.5 400.5 L157 406.0 L151.5 411.5Z" fill="#1f6e8e"/><text x="167" y="410.0" font-size="12.3" fill="#111" stroke="#111" stroke-width="0.25" font-family="Liberation Sans">Sledovaná silniční vozidla</text><path d="M121 424.5 H127" stroke="#7a7a7a" stroke-dasharray="1 1"/><rect x="112.5" y="420.5" width="8" height="8" rx="1" fill="#fafafa" stroke="#8f8f8f"/><path d="M114 424.5 H119" stroke="#2a3f8a"/><path d="M127 417.0 h7 v2 h8 v10 h-15z" fill="url(#fg)"/><path d="M128 418.0 h5" stroke="#8fd0e6" stroke-width="1"/><rect x="127" y="427.5" width="15" height="1.5" fill="#0e3a52" opacity="0.85"/><text x="148" y="428.0" font-size="12.3" fill="#111" stroke="#111" stroke-width="0.25" font-family="Liberation Sans">Knihy jízd silničních vozidel</text><path d="M140 442.5 H146" stroke="#7a7a7a" stroke-dasharray="1 1"/><path d="M145 442.5 H150" stroke="#7a7a7a" stroke-dasharray="1 1"/><path d="M151.5 436.5 L157 442.0 L151.5 447.5Z" fill="#1f6e8e"/><text x="167" y="446.0" font-size="12.3" fill="#111" stroke="#111" stroke-width="0.25" font-family="Liberation Sans">Tvorba knihy jízd silničního vozidla</text><path d="M140 460.5 H146" stroke="#7a7a7a" stroke-dasharray="1 1"/><path d="M145 460.5 H150" stroke="#7a7a7a" stroke-dasharray="1 1"/><path d="M151.5 454.5 L157 460.0 L151.5 465.5Z" fill="#1f6e8e"/><text x="167" y="464.0" font-size="12.3" fill="#111" stroke="#111" stroke-width="0.25" font-family="Liberation Sans">Seznam knih jízd silničních vozidel</text><path d="M121 478.5 H127" stroke="#7a7a7a" stroke-dasharray="1 1"/><rect x="112.5" y="474.5" width="8" height="8" rx="1" fill="#fafafa" stroke="#8f8f8f"/><path d="M114 478.5 H119" stroke="#2a3f8a"/><path d="M127 471.0 h7 v2 h8 v10 h-15z" fill="url(#fg)"/><path d="M128 472.0 h5" stroke="#8fd0e6" stroke-width="1"/><rect x="127" y="481.5" width="15" height="1.5" fill="#0e3a52" opacity="0.85"/><text x="148" y="482.0" font-size="12.3" fill="#111" stroke="#111" stroke-width="0.25" font-family="Liberation Sans">Záznamy o provozu silničních vozidel</text><path d="M140 496.5 H146" stroke="#7a7a7a" stroke-dasharray="1 1"/><path d="M145 496.5 H150" stroke="#7a7a7a" stroke-dasharray="1 1"/><path d="M151.5 490.5 L157 496.0 L151.5 501.5Z" fill="#1f6e8e"/><text x="167" y="500.0" font-size="12.3" fill="#111" stroke="#111" stroke-width="0.25" font-family="Liberation Sans">Tvorba záznamu o provozu silničního vozidla</text><path d="M140 514.5 H146" stroke="#7a7a7a" stroke-dasharray="1 1"/><path d="M145 514.5 H150" stroke="#7a7a7a" stroke-dasharray="1 1"/><path d="M151.5 508.5 L157 514.0 L151.5 519.5Z" fill="#1f6e8e"/><text x="167" y="518.0" font-size="12.3" fill="#111" stroke="#111" stroke-width="0.25" font-family="Liberation Sans">Seznam záznamů o provozu silničních vozidel</text><path d="M140 532.5 H146" stroke="#7a7a7a" stroke-dasharray="1 1"/><path d="M145 532.5 H150" stroke="#7a7a7a" stroke-dasharray="1 1"/><path d="M151.5 526.5 L157 532.0 L151.5 537.5Z" fill="#1f6e8e"/><text x="167" y="536.0" font-size="12.3" fill="#111" stroke="#111" stroke-width="0.25" font-family="Liberation Sans">Akce připojené k záznamům o provozu vozidel</text><path d="M121 550.5 H127" stroke="#7a7a7a" stroke-dasharray="1 1"/><rect x="112.5" y="546.5" width="8" height="8" rx="1" fill="#fafafa" stroke="#8f8f8f"/><path d="M114 550.5 H119" stroke="#2a3f8a"/><path d="M127 543.0 h7 v2 h8 v10 h-15z" fill="url(#fg)"/><path d="M128 544.0 h5" stroke="#8fd0e6" stroke-width="1"/><rect x="127" y="553.5" width="15" height="1.5" fill="#0e3a52" opacity="0.85"/><text x="148" y="554.0" font-size="12.3" fill="#111" stroke="#111" stroke-width="0.25" font-family="Liberation Sans">Evidence pneumatik</text><path d="M140 568.5 H146" stroke="#7a7a7a" stroke-dasharray="1 1"/><path d="M145 568.5 H150" stroke="#7a7a7a" stroke-dasharray="1 1"/><path d="M151.5 562.5 L157 568.0 L151.5 573.5Z" fill="#1f6e8e"/><text x="167" y="572.0" font-size="12.3" fill="#111" stroke="#111" stroke-width="0.25" font-family="Liberation Sans">Stavy pneumatik</text><path d="M140 586.5 H146" stroke="#7a7a7a" stroke-dasharray="1 1"/><path d="M145 586.5 H150" stroke="#7a7a7a" stroke-dasharray="1 1"/><path d="M151.5 580.5 L157 586.0 L151.5 591.5Z" fill="#1f6e8e"/><text x="167" y="590.0" font-size="12.3" fill="#111" stroke="#111" stroke-width="0.25" font-family="Liberation Sans">Katalog pneumatik</text><path d="M140 604.5 H146" stroke="#7a7a7a" stroke-dasharray="1 1"/><path d="M145 604.5 H150" stroke="#7a7a7a" stroke-dasharray="1 1"/><path d="M151.5 598.5 L157 604.0 L151.5 609.5Z" fill="#1f6e8e"/><text x="167" y="608.0" font-size="12.3" fill="#111" stroke="#111" stroke-width="0.25" font-family="Liberation Sans">Evidované pneumatiky</text><path d="M140 622.5 H146" stroke="#7a7a7a" stroke-dasharray="1 1"/><path d="M145 622.5 H150" stroke="#7a7a7a" stroke-dasharray="1 1"/><path d="M151.5 616.5 L157 622.0 L151.5 627.5Z" fill="#1f6e8e"/><text x="167" y="626.0" font-size="12.3" fill="#111" stroke="#111" stroke-width="0.25" font-family="Liberation Sans">Doprava - Pneumatiky - Přehled vozidel</text><path d="M140 640.5 H146" stroke="#7a7a7a" stroke-dasharray="1 1"/><path d="M145 640.5 H150" stroke="#7a7a7a" stroke-dasharray="1 1"/><path d="M151.5 634.5 L157 640.0 L151.5 645.5Z" fill="#1f6e8e"/><text x="167" y="644.0" font-size="12.3" fill="#111" stroke="#111" stroke-width="0.25" font-family="Liberation Sans">Protokoly o stavu pneumatik</text><path d="M121 658.5 H127" stroke="#7a7a7a" stroke-dasharray="1 1"/><path d="M126 658.5 H131" stroke="#7a7a7a" stroke-dasharray="1 1"/><path d="M132.5 652.5 L138 658.0 L132.5 663.5Z" fill="#1f6e8e"/><text x="148" y="662.0" font-size="12.3" fill="#111" stroke="#111" stroke-width="0.25" font-family="Liberation Sans">Satelitní sledování vozidel</text><path d="M102 676.5 H108" stroke="#7a7a7a" stroke-dasharray="1 1"/><rect x="93.5" y="672.5" width="8" height="8" rx="1" fill="#fafafa" stroke="#8f8f8f"/><path d="M95 676.5 H100" stroke="#2a3f8a"/><path d="M97.5 674.0 V679.0" stroke="#2a3f8a"/><path d="M108 669.0 h7 v2 h8 v10 h-15z" fill="url(#fg)"/><path d="M109 670.0 h5" stroke="#8fd0e6" stroke-width="1"/><rect x="108" y="679.5" width="15" height="1.5" fill="#0e3a52" opacity="0.85"/><text x="129" y="680.0" font-size="12.3" fill="#111" stroke="#111" stroke-width="0.25" font-family="Liberation Sans">Kontejnerová přeprava</text><path d="M102 694.5 H108" stroke="#7a7a7a" stroke-dasharray="1 1"/><rect x="93.5" y="690.5" width="8" height="8" rx="1" fill="#fafafa" stroke="#8f8f8f"/><path d="M95 694.5 H100" stroke="#2a3f8a"/><path d="M97.5 692.0 V697.0" stroke="#2a3f8a"/><path d="M108 687.0 h7 v2 h8 v10 h-15z" fill="url(#fg)"/><path d="M109 688.0 h5" stroke="#8fd0e6" stroke-width="1"/><rect x="108" y="697.5" width="15" height="1.5" fill="#0e3a52" opacity="0.85"/><text x="129" y="698.0" font-size="12.3" fill="#111" stroke="#111" stroke-width="0.25" font-family="Liberation Sans">Tankovací stanice</text><path d="M102 712.5 H108" stroke="#7a7a7a" stroke-dasharray="1 1"/><rect x="93.5" y="708.5" width="8" height="8" rx="1" fill="#fafafa" stroke="#8f8f8f"/><path d="M95 712.5 H100" stroke="#2a3f8a"/><path d="M97.5 710.0 V715.0" stroke="#2a3f8a"/><path d="M108 705.0 h7 v2 h8 v10 h-15z" fill="url(#fg)"/><path d="M109 706.0 h5" stroke="#8fd0e6" stroke-width="1"/><rect x="108" y="715.5" width="15" height="1.5" fill="#0e3a52" opacity="0.85"/><text x="129" y="716.0" font-size="12.3" fill="#111" stroke="#111" stroke-width="0.25" font-family="Liberation Sans">Importy dat - Doprava</text><path d="M102 730.5 H108" stroke="#7a7a7a" stroke-dasharray="1 1"/><rect x="93.5" y="726.5" width="8" height="8" rx="1" fill="#fafafa" stroke="#8f8f8f"/><path d="M95 730.5 H100" stroke="#2a3f8a"/><path d="M97.5 728.0 V733.0" stroke="#2a3f8a"/><path d="M108 723.0 h7 v2 h8 v10 h-15z" fill="url(#fg)"/><path d="M109 724.0 h5" stroke="#8fd0e6" stroke-width="1"/><rect x="108" y="733.5" width="15" height="1.5" fill="#0e3a52" opacity="0.85"/><text x="129" y="734.0" font-size="12.3" fill="#111" stroke="#111" stroke-width="0.25" font-family="Liberation Sans">Přehledy - Doprava</text><path d="M83 748.5 H89" stroke="#7a7a7a" stroke-dasharray="1 1"/><rect x="74.5" y="744.5" width="8" height="8" rx="1" fill="#fafafa" stroke="#8f8f8f"/><path d="M76 748.5 H81" stroke="#2a3f8a"/><path d="M78.5 746.0 V751.0" stroke="#2a3f8a"/><path d="M89 741.0 h7 v2 h8 v10 h-15z" fill="url(#fg)"/><path d="M90 742.0 h5" stroke="#8fd0e6" stroke-width="1"/><rect x="89" y="751.5" width="15" height="1.5" fill="#0e3a52" opacity="0.85"/><text x="110" y="752.0" font-size="12.3" fill="#111" stroke="#111" stroke-width="0.25" font-family="Liberation Sans">Personalistika</text><path d="M83 766.5 H89" stroke="#7a7a7a" stroke-dasharray="1 1"/><rect x="74.5" y="762.5" width="8" height="8" rx="1" fill="#fafafa" stroke="#8f8f8f"/><path d="M76 766.5 H81" stroke="#2a3f8a"/><path d="M78.5 764.0 V769.0" stroke="#2a3f8a"/><path d="M89 759.0 h7 v2 h8 v10 h-15z" fill="url(#fg)"/><path d="M90 760.0 h5" stroke="#8fd0e6" stroke-width="1"/><rect x="89" y="769.5" width="15" height="1.5" fill="#0e3a52" opacity="0.85"/><text x="110" y="770.0" font-size="12.3" fill="#111" stroke="#111" stroke-width="0.25" font-family="Liberation Sans">Mzdy</text><path d="M83 784.5 H89" stroke="#7a7a7a" stroke-dasharray="1 1"/><rect x="74.5" y="780.5" width="8" height="8" rx="1" fill="#fafafa" stroke="#8f8f8f"/><path d="M76 784.5 H81" stroke="#2a3f8a"/><path d="M78.5 782.0 V787.0" stroke="#2a3f8a"/><path d="M89 777.0 h7 v2 h8 v10 h-15z" fill="url(#fg)"/><path d="M90 778.0 h5" stroke="#8fd0e6" stroke-width="1"/><rect x="89" y="787.5" width="15" height="1.5" fill="#0e3a52" opacity="0.85"/><text x="110" y="788.0" font-size="12.3" fill="#111" stroke="#111" stroke-width="0.25" font-family="Liberation Sans">Majetek</text><path d="M83 802.5 H89" stroke="#7a7a7a" stroke-dasharray="1 1"/><rect x="74.5" y="798.5" width="8" height="8" rx="1" fill="#fafafa" stroke="#8f8f8f"/><path d="M76 802.5 H81" stroke="#2a3f8a"/><path d="M78.5 800.0 V805.0" stroke="#2a3f8a"/><path d="M89 795.0 h7 v2 h8 v10 h-15z" fill="url(#fg)"/><path d="M90 796.0 h5" stroke="#8fd0e6" stroke-width="1"/><rect x="89" y="805.5" width="15" height="1.5" fill="#0e3a52" opacity="0.85"/><text x="110" y="806.0" font-size="12.3" fill="#111" stroke="#111" stroke-width="0.25" font-family="Liberation Sans">Evidence instalací softwaru</text><path d="M83 820.5 H89" stroke="#7a7a7a" stroke-dasharray="1 1"/><rect x="74.5" y="816.5" width="8" height="8" rx="1" fill="#fafafa" stroke="#8f8f8f"/><path d="M76 820.5 H81" stroke="#2a3f8a"/><path d="M78.5 818.0 V823.0" stroke="#2a3f8a"/><path d="M89 813.0 h7 v2 h8 v10 h-15z" fill="url(#fg)"/><path d="M90 814.0 h5" stroke="#8fd0e6" stroke-width="1"/><rect x="89" y="823.5" width="15" height="1.5" fill="#0e3a52" opacity="0.85"/><text x="110" y="824.0" font-size="12.3" fill="#111" stroke="#111" stroke-width="0.25" font-family="Liberation Sans">Knowledge management</text><path d="M83 838.5 H89" stroke="#7a7a7a" stroke-dasharray="1 1"/><rect x="74.5" y="834.5" width="8" height="8" rx="1" fill="#fafafa" stroke="#8f8f8f"/><path d="M76 838.5 H81" stroke="#2a3f8a"/><path d="M78.5 836.0 V841.0" stroke="#2a3f8a"/><path d="M89 831.0 h7 v2 h8 v10 h-15z" fill="url(#fg)"/><path d="M90 832.0 h5" stroke="#8fd0e6" stroke-width="1"/><rect x="89" y="841.5" width="15" height="1.5" fill="#0e3a52" opacity="0.85"/><text x="110" y="842.0" font-size="12.3" fill="#111" stroke="#111" stroke-width="0.25" font-family="Liberation Sans">Správa dokumentů (DMS)</text><path d="M83 856.5 H89" stroke="#7a7a7a" stroke-dasharray="1 1"/><rect x="74.5" y="852.5" width="8" height="8" rx="1" fill="#fafafa" stroke="#8f8f8f"/><path d="M76 856.5 H81" stroke="#2a3f8a"/><path d="M78.5 854.0 V859.0" stroke="#2a3f8a"/><path d="M89 849.0 h7 v2 h8 v10 h-15z" fill="url(#fg)"/><path d="M90 850.0 h5" stroke="#8fd0e6" stroke-width="1"/><rect x="89" y="859.5" width="15" height="1.5" fill="#0e3a52" opacity="0.85"/><text x="110" y="860.0" font-size="12.3" fill="#111" stroke="#111" stroke-width="0.25" font-family="Liberation Sans">Souhrnné pohledy</text></svg></div>
<div class="a" style="left:395px;top:121px;width:17px;height:864px;background:#f0f5fa"></div>
<div class="a" style="left:395px;top:121px;width:17px;height:18px;background:#fafcfe"></div>
<svg style="left:399px;top:126px" width="9" height="6"><path d="M0.5 5 L4.5 1 L8.5 5" fill="none" stroke="#222" stroke-width="1.4"/></svg>
<div class="a" style="left:395px;top:317px;width:17px;height:570px;background:#d3e3f3"></div>
<div class="a" style="left:395px;top:969px;width:17px;height:17px;background:#fafcfe"></div>
<svg style="left:399px;top:975px" width="9" height="6"><path d="M0.5 1 L4.5 5 L8.5 1" fill="none" stroke="#222" stroke-width="1.4"/></svg>
<div class="a" style="left:28px;top:987px;width:384px;height:19px;background:#f0f5fa"></div>
<div class="a" style="left:46px;top:988px;width:301px;height:17px;background:#d3e3f3"></div>
<svg style="left:34px;top:992px" width="6" height="9"><path d="M5 0.5 L1 4.5 L5 8.5" fill="none" stroke="#222" stroke-width="1.4"/></svg>
<svg style="left:383px;top:992px" width="6" height="9"><path d="M1 0.5 L5 4.5 L1 8.5" fill="none" stroke="#222" stroke-width="1.4"/></svg>
<div class="a" style="left:417px;top:71px;width:1px;height:939px;background:#cfe0f3"></div>
<svg style="left:418px;top:72px" width="1262" height="938"><rect x="0" y="0" width="1260" height="938" fill="#004b97"/><path d="M100.5 0 L100.5 938" stroke="#fff" stroke-width="1"/><path d="M240.5 0 L240.5 938" stroke="#fff" stroke-width="1"/><path d="M379.5 0 L379.5 938" stroke="#fff" stroke-width="1"/><path d="M519.5 0 L519.5 938" stroke="#fff" stroke-width="1"/><path d="M658.5 0 L658.5 938" stroke="#fff" stroke-width="1"/><path d="M798.5 0 L798.5 938" stroke="#fff" stroke-width="1"/><path d="M938.5 0 L938.5 938" stroke="#fff" stroke-width="1"/><path d="M0 139.5 L1260 139.5" stroke="#fff" stroke-width="1"/><path d="M0 279.3 L1260 279.3" stroke="#fff" stroke-width="1.2"/><path d="M0 419.0 L1260 419.0" stroke="#fff" stroke-width="1.5"/><path d="M0 558.9 L1260 558.9" stroke="#fff" stroke-width="1.6"/><path d="M0 698.8 L1260 698.8" stroke="#fff" stroke-width="1.6"/><path d="M0 838.8 L1260 838.8" stroke="#fff" stroke-width="1.6"/><rect x="1086" y="0" width="36" height="139" fill="#fff"/><rect x="1078" y="0" width="8" height="139" fill="#004b97"/><rect x="1078" y="0" width="1" height="139" fill="#fff"/><rect x="1086" y="0" width="1" height="139" fill="#fff"/><rect x="1078" y="139" width="8" height="1" fill="#fff"/><rect x="1078" y="130" width="8" height="1" fill="#fff"/><rect x="1078" y="121" width="8" height="1" fill="#fff"/><rect x="1078" y="113" width="8" height="1" fill="#fff"/><rect x="1078" y="104" width="8" height="1" fill="#fff"/><rect x="1078" y="95" width="8" height="1" fill="#fff"/><rect x="1078" y="86" width="8" height="1" fill="#fff"/><rect x="1078" y="77" width="8" height="1" fill="#fff"/><rect x="1078" y="69" width="8" height="1" fill="#fff"/><rect x="1078" y="60" width="8" height="1" fill="#fff"/><rect x="1078" y="51" width="8" height="1" fill="#fff"/><rect x="1078" y="42" width="8" height="1" fill="#fff"/><rect x="1078" y="33" width="8" height="1" fill="#fff"/><rect x="1078" y="25" width="8" height="1" fill="#fff"/><rect x="1078" y="16" width="8" height="1" fill="#fff"/><rect x="1078" y="7" width="8" height="1" fill="#fff"/><rect x="1078" y="-2" width="8" height="1" fill="#fff"/><rect x="1086" y="34" width="36" height="9" fill="#fff"/><rect x="1088.0" y="35" width="6.5" height="7" fill="#004b97"/><rect x="1096.7" y="35" width="6.5" height="7" fill="#004b97"/><rect x="1105.4" y="35" width="6.5" height="7" fill="#004b97"/><rect x="1114.1" y="35" width="6.5" height="7" fill="#004b97"/><rect x="1078" y="139" width="44" height="799" fill="#004b97"/><rect x="1078" y="139" width="1" height="799" fill="#fff"/><rect x="1087" y="139" width="1" height="799" fill="#fff"/><rect x="1095" y="139" width="1" height="799" fill="#fff"/><rect x="1104" y="139" width="1" height="799" fill="#fff"/><rect x="1113" y="139" width="1" height="799" fill="#fff"/><rect x="1122" y="139" width="1" height="799" fill="#fff"/><rect x="1078" y="139" width="44" height="1" fill="#fff"/><rect x="1078" y="148" width="44" height="1" fill="#fff"/><rect x="1078" y="157" width="44" height="1" fill="#fff"/><rect x="1078" y="165" width="44" height="1" fill="#fff"/><rect x="1078" y="174" width="44" height="1" fill="#fff"/><rect x="1078" y="183" width="44" height="1" fill="#fff"/><rect x="1078" y="192" width="44" height="1" fill="#fff"/><rect x="1078" y="201" width="44" height="1" fill="#fff"/><rect x="1078" y="209" width="44" height="1" fill="#fff"/><rect x="1078" y="218" width="44" height="1" fill="#fff"/><rect x="1078" y="227" width="44" height="1" fill="#fff"/><rect x="1078" y="236" width="44" height="1" fill="#fff"/><rect x="1078" y="245" width="44" height="1" fill="#fff"/><rect x="1078" y="253" width="44" height="1" fill="#fff"/><rect x="1078" y="262" width="44" height="1" fill="#fff"/><rect x="1078" y="271" width="44" height="1" fill="#fff"/><rect x="1078" y="280" width="44" height="1" fill="#fff"/><rect x="1078" y="289" width="44" height="1" fill="#fff"/><rect x="1078" y="297" width="44" height="1" fill="#fff"/><rect x="1078" y="306" width="44" height="1" fill="#fff"/><rect x="1078" y="315" width="44" height="1" fill="#fff"/><rect x="1078" y="324" width="44" height="1" fill="#fff"/><rect x="1078" y="333" width="44" height="1" fill="#fff"/><rect x="1078" y="341" width="44" height="1" fill="#fff"/><rect x="1078" y="350" width="44" height="1" fill="#fff"/><rect x="1078" y="359" width="44" height="1" fill="#fff"/><rect x="1078" y="368" width="44" height="1" fill="#fff"/><rect x="1078" y="377" width="44" height="1" fill="#fff"/><rect x="1078" y="385" width="44" height="1" fill="#fff"/><rect x="1078" y="394" width="44" height="1" fill="#fff"/><rect x="1078" y="403" width="44" height="1" fill="#fff"/><rect x="1078" y="412" width="44" height="1" fill="#fff"/><rect x="1078" y="421" width="44" height="1" fill="#fff"/><rect x="1078" y="429" width="44" height="1" fill="#fff"/><rect x="1078" y="438" width="44" height="1" fill="#fff"/><rect x="1078" y="447" width="44" height="1" fill="#fff"/><rect x="1078" y="456" width="44" height="1" fill="#fff"/><rect x="1078" y="465" width="44" height="1" fill="#fff"/><rect x="1078" y="473" width="44" height="1" fill="#fff"/><rect x="1078" y="482" width="44" height="1" fill="#fff"/><rect x="1078" y="491" width="44" height="1" fill="#fff"/><rect x="1078" y="500" width="44" height="1" fill="#fff"/><rect x="1078" y="509" width="44" height="1" fill="#fff"/><rect x="1078" y="517" width="44" height="1" fill="#fff"/><rect x="1078" y="526" width="44" height="1" fill="#fff"/><rect x="1078" y="535" width="44" height="1" fill="#fff"/><rect x="1078" y="544" width="44" height="1" fill="#fff"/><rect x="1078" y="553" width="44" height="1" fill="#fff"/><rect x="1078" y="561" width="44" height="1" fill="#fff"/><rect x="1078" y="570" width="44" height="1" fill="#fff"/><rect x="1078" y="579" width="44" height="1" fill="#fff"/><rect x="1078" y="588" width="44" height="1" fill="#fff"/><rect x="1078" y="597" width="44" height="1" fill="#fff"/><rect x="1078" y="605" width="44" height="1" fill="#fff"/><rect x="1078" y="614" width="44" height="1" fill="#fff"/><rect x="1078" y="623" width="44" height="1" fill="#fff"/><rect x="1078" y="632" width="44" height="1" fill="#fff"/><rect x="1078" y="641" width="44" height="1" fill="#fff"/><rect x="1078" y="649" width="44" height="1" fill="#fff"/><rect x="1078" y="658" width="44" height="1" fill="#fff"/><rect x="1078" y="667" width="44" height="1" fill="#fff"/><rect x="1078" y="676" width="44" height="1" fill="#fff"/><rect x="1078" y="685" width="44" height="1" fill="#fff"/><rect x="1078" y="693" width="44" height="1" fill="#fff"/><rect x="1078" y="702" width="44" height="1" fill="#fff"/><rect x="1078" y="711" width="44" height="1" fill="#fff"/><rect x="1078" y="720" width="44" height="1" fill="#fff"/><rect x="1078" y="729" width="44" height="1" fill="#fff"/><rect x="1078" y="737" width="44" height="1" fill="#fff"/><rect x="1078" y="746" width="44" height="1" fill="#fff"/><rect x="1078" y="755" width="44" height="1" fill="#fff"/><rect x="1078" y="764" width="44" height="1" fill="#fff"/><rect x="1078" y="773" width="44" height="1" fill="#fff"/><rect x="1078" y="781" width="44" height="1" fill="#fff"/><rect x="1078" y="790" width="44" height="1" fill="#fff"/><rect x="1078" y="799" width="44" height="1" fill="#fff"/><rect x="1078" y="808" width="44" height="1" fill="#fff"/><rect x="1078" y="817" width="44" height="1" fill="#fff"/><rect x="1078" y="825" width="44" height="1" fill="#fff"/><rect x="1078" y="834" width="44" height="1" fill="#fff"/><rect x="1078" y="843" width="44" height="1" fill="#fff"/><rect x="1078" y="852" width="44" height="1" fill="#fff"/><rect x="1078" y="861" width="44" height="1" fill="#fff"/><rect x="1078" y="869" width="44" height="1" fill="#fff"/><rect x="1078" y="878" width="44" height="1" fill="#fff"/><rect x="1078" y="887" width="44" height="1" fill="#fff"/><rect x="1078" y="896" width="44" height="1" fill="#fff"/><rect x="1078" y="905" width="44" height="1" fill="#fff"/><rect x="1078" y="913" width="44" height="1" fill="#fff"/><rect x="1078" y="922" width="44" height="1" fill="#fff"/><rect x="1078" y="931" width="44" height="1" fill="#fff"/><rect x="1078" y="940" width="44" height="1" fill="#fff"/><clipPath id="qc"><rect x="938" y="0" width="140" height="139"/></clipPath><g clip-path="url(#qc)"><circle cx="1007.5" cy="69" r="71" fill="#fff"/><circle cx="1008.0" cy="69" r="36.5" fill="#004b97"/><path d="M1008.0 32 V106 M971.5 69.5 H1044.5" stroke="#d6e2f2" stroke-width="1"/><path d="M1033 71 L1079 115 L1054 140 L1009 93Z" fill="#fff"/></g><path d="M938.5 0 L938.5 139" stroke="#fff" stroke-width="1"/></svg>
<div class="t" style="left:1546px;top:81px;font-size:21.5px;font-weight:normal;color:#fff;line-height:24px;letter-spacing:0.3px;-webkit-text-stroke:0.9px #fff">CENTRÁLNÍ</div>
<div class="t" style="left:1546px;top:105px;font-size:22px;font-weight:normal;color:#fff;line-height:24px;letter-spacing:0.3px;-webkit-text-stroke:0.9px #fff">MOZEK</div>
<div class="t" style="left:1546px;top:129px;font-size:22px;font-weight:normal;color:#fff;line-height:24px;letter-spacing:0.3px;-webkit-text-stroke:0.9px #fff">FIRMY</div>
<svg style="left:1585px;top:254px" width="36" height="30"><g transform="rotate(20 8 15)"><rect x="3" y="2" width="8" height="22" rx="1" fill="#2a8ef0"/><rect x="5" y="5" width="4" height="7" fill="#fff"/><circle cx="7" cy="19" r="1.6" fill="#222"/></g><rect x="15" y="2" width="9" height="24" rx="1" fill="#c8c8c8"/><rect x="17" y="5" width="5" height="8" fill="#fff"/><circle cx="19.5" cy="20" r="1.8" fill="#333"/><rect x="25" y="2" width="9" height="24" rx="1" fill="#b0b0b0"/><rect x="27" y="5" width="5" height="8" fill="#fff"/><circle cx="29.5" cy="20" r="1.8" fill="#333"/></svg>
<div class="t" style="left:1602px;top:292px;transform:translateX(-50%);text-align:center;font-size:10.4px;line-height:13px;color:#fff">Evidovaná silniční<br>vozidla</div>
<svg style="left:1598px;top:386px" width="36" height="30"><path d="M18 2 q10 -2 15 8 q-2 8 -6 14 l-3 -4 q2 -4 -2 -6 l-4 -2z" fill="#e8141c"/><path d="M30 8 l3 5 l-2 1z" fill="#e8141c"/><rect x="1" y="8" width="14" height="12" rx="2" fill="#b9b9b9"/><rect x="15" y="12" width="8" height="8" fill="#8c8c8c"/><rect x="1" y="19" width="22" height="3" fill="#777"/><circle cx="5" cy="24" r="2" fill="#666"/><circle cx="18" cy="24" r="2" fill="#666"/></svg>
<div class="t" style="left:1614px;top:425px;transform:translateX(-50%);text-align:center;font-size:10.6px;line-height:13px;color:#fff">Seznam záznamů o<br>provozu silničních ...</div>
<div class="a" style="left:446px;top:97px;width:841px;height:194px;background:#fff;border-left:1px solid #f0f0f0"></div>
<div class="a" style="left:446px;top:97px;width:841px;height:27px;background:#e9e9e9"></div>
<div class="a" style="left:446px;top:124px;width:841px;height:1px;background:#dce7f3"></div>
<svg style="left:452px;top:103px" width="16" height="16"><path d="M1 1 L15 8 L1 15Z" fill="#fff" stroke="#f4f4f4"/><path d="M3.5 12.5 L12 8.5" stroke="#a0a0a0" stroke-width="1.4" opacity="1"/></svg>
<div class="t" style="left:472px;top:104px;font-size:11.8px;font-weight:bold;color:#3c3c3c">Seznam záznamů o provozu vozidel</div>
<div class="t" style="left:1143px;width:60px;text-align:right;top:104px;font-size:12px;font-weight:bold;color:#3a3a3a;-webkit-text-stroke:0.4px currentColor;font-family:'Liberation Serif',serif">11</div>
<svg style="left:1213px;top:106.5px" width="64" height="12"><path d="M1 5 H11" stroke="#000" stroke-width="1.6"/><rect x="25.75" y="0.75" width="9.5" height="9.5" fill="none" stroke="#000" stroke-width="1.5"/><path d="M50.5 0.5 L60.5 10.5 M60.5 0.5 L50.5 10.5" stroke="#000" stroke-width="2.2"/></svg>
<div class="a" style="left:459px;top:134px;width:675px;height:157px;border:1px solid #cfdff5;border-bottom:none;background:#fff"></div>
<div class="a" style="left:460px;top:135px;width:656px;height:18px;background:linear-gradient(#fff,#f1f6fc)"></div>
<div class="t" style="left:462px;top:137px;font-size:11px;letter-spacing:-0.35px;color:#1a1a1a">Evidenční číslo dokladu</div>
<div class="t" style="left:600px;top:137px;font-size:11px;letter-spacing:-0.35px;color:#1a1a1a">Vozidlo</div>
<div class="t" style="left:704px;top:137px;font-size:11px;letter-spacing:-0.35px;color:#1a1a1a">Registrační značka</div>
<div class="t" style="left:811px;top:137px;font-size:11px;letter-spacing:-0.35px;color:#1a1a1a">Název vozidla</div>
<div class="t" style="left:908px;top:137px;font-size:11px;letter-spacing:-0.35px;color:#1a1a1a">Období od</div>
<div class="t" style="left:1021px;top:137px;font-size:11px;letter-spacing:-0.35px;color:#1a1a1a">Období do</div>
<div class="a" style="left:460px;top:153px;width:656px;height:18px;background:#e0ebfb"></div>
<div class="t" style="left:462px;top:155px;font-size:11px;letter-spacing:-0.131px;color:#111;clip-path:inset(0 0 0px 0)">ZPVV-2014-000001</div>
<div class="t" style="left:600px;top:155px;font-size:11px;letter-spacing:-0.117px;color:#111;clip-path:inset(0 0 0px 0)">11111111ABCD</div>
<div class="t" style="left:704px;top:155px;font-size:11px;letter-spacing:-0.05px;color:#111;clip-path:inset(0 0 0px 0)">3B44356</div>
<div class="t" style="left:811px;top:155px;font-size:11px;letter-spacing:-0.35px;color:#111;clip-path:inset(0 0 0px 0)">škoda octavia</div>
<div class="t" style="left:908px;top:155px;font-size:11px;letter-spacing:-0.1px;color:#111;clip-path:inset(0 0 0px 0)">1.12.2014 0:00</div>
<div class="t" style="left:1021px;top:155px;font-size:11px;letter-spacing:-0.093px;color:#111;clip-path:inset(0 0 0px 0)">21.12.2014 0:00</div>
<div class="a" style="left:460px;top:171px;width:656px;height:18px;background:#cedff9"></div>
<div class="t" style="left:462px;top:173px;font-size:11px;letter-spacing:-0.131px;color:#111;clip-path:inset(0 0 0px 0)">ZPVV-2017-000001</div>
<div class="t" style="left:600px;top:173px;font-size:11px;letter-spacing:-0.05px;color:#111;clip-path:inset(0 0 0px 0)">2B95241</div>
<div class="t" style="left:704px;top:173px;font-size:11px;letter-spacing:-0.05px;color:#111;clip-path:inset(0 0 0px 0)">2B95241</div>
<div class="t" style="left:811px;top:173px;font-size:11px;letter-spacing:-0.35px;color:#111;clip-path:inset(0 0 0px 0)">Seat Ibiza</div>
<div class="t" style="left:908px;top:173px;font-size:11px;letter-spacing:-0.1px;color:#111;clip-path:inset(0 0 0px 0)">1.11.2017 4:39</div>
<div class="t" style="left:1021px;top:173px;font-size:11px;letter-spacing:-0.093px;color:#111;clip-path:inset(0 0 0px 0)">1.11.2017 20:17</div>
<div class="a" style="left:460px;top:189px;width:656px;height:18px;background:#e0ebfb"></div>
<div class="t" style="left:462px;top:191px;font-size:11px;letter-spacing:-0.131px;color:#111;clip-path:inset(0 0 0px 0)">ZPVV-2017-000002</div>
<div class="t" style="left:600px;top:191px;font-size:11px;letter-spacing:-0.05px;color:#111;clip-path:inset(0 0 0px 0)">2B95241</div>
<div class="t" style="left:704px;top:191px;font-size:11px;letter-spacing:-0.05px;color:#111;clip-path:inset(0 0 0px 0)">2B95241</div>
<div class="t" style="left:811px;top:191px;font-size:11px;letter-spacing:-0.35px;color:#111;clip-path:inset(0 0 0px 0)">Seat Ibiza</div>
<div class="t" style="left:908px;top:191px;font-size:11px;letter-spacing:-0.1px;color:#111;clip-path:inset(0 0 0px 0)">3.11.2017 7:13</div>
<div class="t" style="left:1021px;top:191px;font-size:11px;letter-spacing:-0.093px;color:#111;clip-path:inset(0 0 0px 0)">3.11.2017 12:43</div>
<div class="a" style="left:460px;top:207px;width:656px;height:18px;background:#cedff9"></div>
<div class="t" style="left:462px;top:209px;font-size:11px;letter-spacing:-0.131px;color:#111;clip-path:inset(0 0 0px 0)">ZPVV-2017-000003</div>
<div class="t" style="left:600px;top:209px;font-size:11px;letter-spacing:-0.05px;color:#111;clip-path:inset(0 0 0px 0)">2B95241</div>
<div class="t" style="left:704px;top:209px;font-size:11px;letter-spacing:-0.05px;color:#111;clip-path:inset(0 0 0px 0)">2B95241</div>
<div class="t" style="left:811px;top:209px;font-size:11px;letter-spacing:-0.35px;color:#111;clip-path:inset(0 0 0px 0)">Seat Ibiza</div>
<div class="t" style="left:908px;top:209px;font-size:11px;letter-spacing:-0.1px;color:#111;clip-path:inset(0 0 0px 0)">6.11.2017 6:36</div>
<div class="t" style="left:1021px;top:209px;font-size:11px;letter-spacing:-0.093px;color:#111;clip-path:inset(0 0 0px 0)">6.11.2017 19:31</div>
<div class="a" style="left:460px;top:225px;width:656px;height:18px;background:#03466f"></div>
<div class="t" style="left:462px;top:227px;font-size:11px;letter-spacing:-0.131px;color:#fff;clip-path:inset(0 0 0px 0)">ZPVV-2017-000004</div>
<div class="t" style="left:600px;top:227px;font-size:11px;letter-spacing:-0.05px;color:#fff;clip-path:inset(0 0 0px 0)">2B95241</div>
<div class="t" style="left:704px;top:227px;font-size:11px;letter-spacing:-0.05px;color:#fff;clip-path:inset(0 0 0px 0)">2B95241</div>
<div class="t" style="left:811px;top:227px;font-size:11px;letter-spacing:-0.35px;color:#fff;clip-path:inset(0 0 0px 0)">Seat Ibiza</div>
<div class="t" style="left:908px;top:227px;font-size:11px;letter-spacing:-0.1px;color:#fff;clip-path:inset(0 0 0px 0)">8.11.2017 5:17</div>
<div class="t" style="left:1021px;top:227px;font-size:11px;letter-spacing:-0.093px;color:#fff;clip-path:inset(0 0 0px 0)">8.11.2017 18:17</div>
<div class="a" style="left:460px;top:243px;width:656px;height:18px;background:#cedff9"></div>
<div class="t" style="left:462px;top:245px;font-size:11px;letter-spacing:-0.131px;color:#111;clip-path:inset(0 0 0px 0)">ZPVV-2018-000001</div>
<div class="t" style="left:600px;top:245px;font-size:11px;letter-spacing:-0.1px;color:#111;clip-path:inset(0 0 0px 0)">2AB2222</div>
<div class="t" style="left:704px;top:245px;font-size:11px;letter-spacing:-0.1px;color:#111;clip-path:inset(0 0 0px 0)">2AB2222</div>
<div class="t" style="left:811px;top:245px;font-size:11px;letter-spacing:-0.35px;color:#111;clip-path:inset(0 0 0px 0)">dvě</div>
<div class="t" style="left:908px;top:245px;font-size:11px;letter-spacing:-0.108px;color:#111;clip-path:inset(0 0 0px 0)">1.3.2018 0:00</div>
<div class="t" style="left:1021px;top:245px;font-size:11px;letter-spacing:-0.108px;color:#111;clip-path:inset(0 0 0px 0)">2.3.2018 0:00</div>
<div class="a" style="left:460px;top:261px;width:656px;height:18px;background:#e0ebfb"></div>
<div class="t" style="left:462px;top:263px;font-size:11px;letter-spacing:-0.131px;color:#111;clip-path:inset(0 0 0px 0)">ZPVV-2018-000002</div>
<div class="t" style="left:600px;top:263px;font-size:11px;letter-spacing:-0.1px;color:#111;clip-path:inset(0 0 0px 0)">3AB3333</div>
<div class="t" style="left:704px;top:263px;font-size:11px;letter-spacing:-0.1px;color:#111;clip-path:inset(0 0 0px 0)">3AB3333</div>
<div class="t" style="left:811px;top:263px;font-size:11px;letter-spacing:-0.35px;color:#111;clip-path:inset(0 0 0px 0)">s návěsem</div>
<div class="t" style="left:908px;top:263px;font-size:11px;letter-spacing:-0.108px;color:#111;clip-path:inset(0 0 0px 0)">3.3.2018 0:00</div>
<div class="t" style="left:1021px;top:263px;font-size:11px;letter-spacing:-0.108px;color:#111;clip-path:inset(0 0 0px 0)">4.3.2018 0:00</div>
<div class="a" style="left:460px;top:279px;width:656px;height:12px;background:#cedff9"></div>
<div class="t" style="left:462px;top:281px;font-size:11px;letter-spacing:-0.175px;color:#111;clip-path:inset(0 0 6px 0)">ZPV-asis-2018-000001</div>
<div class="t" style="left:600px;top:281px;font-size:11px;letter-spacing:-0.1px;color:#111;clip-path:inset(0 0 6px 0)">1AB1111</div>
<div class="t" style="left:704px;top:281px;font-size:11px;letter-spacing:-0.1px;color:#111;clip-path:inset(0 0 6px 0)">1AB1111</div>
<div class="t" style="left:811px;top:281px;font-size:11px;letter-spacing:-0.35px;color:#111;clip-path:inset(0 0 6px 0)">základní</div>
<div class="t" style="left:908px;top:281px;font-size:11px;letter-spacing:-0.108px;color:#111;clip-path:inset(0 0 6px 0)">4.3.2018 0:00</div>
<div class="t" style="left:1021px;top:281px;font-size:11px;letter-spacing:-0.108px;color:#111;clip-path:inset(0 0 6px 0)">5.3.2018 0:00</div>
<div class="a" style="left:597px;top:135px;width:1px;height:156px;background:#fff;opacity:0.75"></div>
<div class="a" style="left:701px;top:135px;width:1px;height:156px;background:#fff;opacity:0.75"></div>
<div class="a" style="left:808px;top:135px;width:1px;height:156px;background:#fff;opacity:0.75"></div>
<div class="a" style="left:905px;top:135px;width:1px;height:156px;background:#fff;opacity:0.75"></div>
<div class="a" style="left:1018px;top:135px;width:1px;height:156px;background:#fff;opacity:0.75"></div>
<div class="a" style="left:1116px;top:135px;width:17px;height:156px;background:#f4f8fc"></div>
<svg style="left:1120px;top:140px" width="9" height="6"><path d="M0.5 5 L4.5 1 L8.5 5" fill="none" stroke="#222" stroke-width="1.4"/></svg>
<div class="a" style="left:1116px;top:254px;width:17px;height:37px;background:#d9e6f3"></div>
<div class="a" style="left:1147px;top:133px;width:128px;height:22px;background:#4b83b5;color:#fff;font-size:11px;letter-spacing:-0.3px;text-align:center;line-height:24px;white-space:nowrap">Zobrazení dokladu</div>
<div class="a" style="left:1147px;top:161px;width:128px;height:22px;background:#4b83b5;color:#fff;font-size:11px;letter-spacing:-0.3px;text-align:center;line-height:24px;white-space:nowrap">Nový doklad</div>
<div class="a" style="left:1147px;top:189px;width:128px;height:22px;background:#4b83b5;color:#fff;font-size:11px;letter-spacing:-0.3px;text-align:center;line-height:24px;white-space:nowrap">Smazat doklad</div>
<div class="a" style="left:1147px;top:229px;width:128px;height:22px;background:#4b83b5;color:#fff;font-size:11px;letter-spacing:-0.3px;text-align:center;line-height:24px;white-space:nowrap">Výkaz událostí</div>
<div class="a" style="left:1147px;top:257px;width:128px;height:22px;background:#4b83b5;color:#fff;font-size:11px;letter-spacing:-0.3px;text-align:center;line-height:24px;white-space:nowrap">Čerpání PHm</div>
<div class="a" style="left:422px;top:290px;width:944px;height:638px;background:#fff;border-left:1px solid #f0f0f0"></div>
<div class="a" style="left:422px;top:290px;width:944px;height:27px;background:#e9e9e9"></div>
<div class="a" style="left:422px;top:317px;width:944px;height:1px;background:#dce7f3"></div>
<svg style="left:428px;top:296px" width="16" height="16"><path d="M1 1 L15 8 L1 15Z" fill="#fff" stroke="#f4f4f4"/><path d="M3.5 12.5 L12 8.5" stroke="#a0a0a0" stroke-width="1.4" opacity="1"/></svg>
<div class="t" style="left:448px;top:297px;font-size:11.8px;font-weight:bold;color:#3c3c3c">Záznam o provozu silničního vozidla</div>
<div class="t" style="left:1222px;width:60px;text-align:right;top:297px;font-size:12px;font-weight:bold;color:#3a3a3a;-webkit-text-stroke:0.4px currentColor;font-family:'Liberation Serif',serif">1</div>
<svg style="left:1292px;top:299.5px" width="64" height="12"><path d="M1 5 H11" stroke="#000" stroke-width="1.6"/><rect x="25.75" y="0.75" width="9.5" height="9.5" fill="none" stroke="#000" stroke-width="1.5"/><path d="M50.5 0.5 L60.5 10.5 M60.5 0.5 L50.5 10.5" stroke="#000" stroke-width="2.2"/></svg>
<div class="t" style="left:433px;top:326px;font-size:11px;letter-spacing:-0.35px;color:#1a1a1a">Evidenční číslo dokladu</div>
<div class="t" style="left:594px;top:326px;font-size:11px;letter-spacing:-0.35px;color:#1a1a1a">Řada</div>
<div class="t" style="left:649px;top:326px;font-size:11px;letter-spacing:-0.35px;color:#1a1a1a">Název řady</div>
<div class="a" style="left:435px;top:344px;width:154px;height:19px;background:#dfe9fb;border:1px solid #cfdcf6;padding-left:2px;font-size:11.5px;letter-spacing:0.45px;font-weight:bold;line-height:17px;white-space:nowrap;overflow:hidden;color:#111">ZPVV-2017-000004</div>
<div class="a" style="left:595px;top:344px;width:50px;height:19px;background:#dfe9fb;border:1px solid #cfdcf6;padding-left:2px;font-size:11px;letter-spacing:-0.35px;font-weight:normal;line-height:17px;white-space:nowrap;overflow:hidden;color:#111"></div>
<div class="a" style="left:627px;top:345px;width:17px;height:17px;background:#d6e3f9;color:#fff;font-size:10px;text-align:center;line-height:19px">···</div>
<div class="a" style="left:651px;top:344px;width:291px;height:19px;background:#dfe9fb;border:1px solid #cfdcf6;padding-left:2px;font-size:11px;letter-spacing:-0.35px;font-weight:normal;line-height:17px;white-space:nowrap;overflow:hidden;color:#111">Záznamy o provozu silničních vozidel</div>
<div class="a" style="left:924px;top:345px;width:17px;height:17px;background:#d6e3f9;color:#fff;font-size:10px;text-align:center;line-height:19px">···</div>
<div class="a" style="left:422px;top:366px;width:504px;height:325px;overflow:hidden">
<div class="a" style="left:11px;top:6px;width:149.5px;height:16px;display:flex;align-items:flex-end;white-space:nowrap;overflow:hidden"><span style="font-size:11px;letter-spacing:-0.35px;color:#1a1a1a;line-height:14px">Období od</span><span style="flex:1;height:2px;margin:0 0 2px 6px;background-image:linear-gradient(90deg,transparent 5.6px,#2a2a44 5.6px);background-size:7px 2px;background-position:right 0;background-repeat:repeat-x"></span></div>
<div class="a" style="left:173px;top:2px;width:330px;height:19px;background:#dafbb6;border:1px solid #cde6c0;padding-left:2px;font-size:11px;letter-spacing:-0.1px;font-weight:normal;line-height:17px;white-space:nowrap;overflow:hidden;color:#111">8.11.2017 5:17</div>
<div class="a" style="left:485px;top:3px;width:17px;height:17px;background:#fff"></div>
<svg style="left:489px;top:9px" width="9" height="6"><path d="M0.5 1 L4.5 5 L8.5 1" fill="none" stroke="#111" stroke-width="1.5"/></svg>
<div class="a" style="left:11px;top:30px;width:149.5px;height:16px;display:flex;align-items:flex-end;white-space:nowrap;overflow:hidden"><span style="font-size:11px;letter-spacing:-0.35px;color:#1a1a1a;line-height:14px">Období do</span><span style="flex:1;height:2px;margin:0 0 2px 6px;background-image:linear-gradient(90deg,transparent 5.6px,#2a2a44 5.6px);background-size:7px 2px;background-position:right 0;background-repeat:repeat-x"></span></div>
<div class="a" style="left:173px;top:26px;width:330px;height:19px;background:#dafbb6;border:1px solid #cde6c0;padding-left:2px;font-size:11px;letter-spacing:-0.093px;font-weight:normal;line-height:17px;white-space:nowrap;overflow:hidden;color:#111">8.11.2017 18:17</div>
<div class="a" style="left:485px;top:27px;width:17px;height:17px;background:#fff"></div>
<svg style="left:489px;top:33px" width="9" height="6"><path d="M0.5 1 L4.5 5 L8.5 1" fill="none" stroke="#111" stroke-width="1.5"/></svg>
<div class="a" style="left:11px;top:54px;width:149.5px;height:16px;display:flex;align-items:flex-end;white-space:nowrap;overflow:hidden"><span style="font-size:11px;letter-spacing:-0.35px;color:#1a1a1a;line-height:14px">Vozidlo</span><span style="flex:1;height:2px;margin:0 0 2px 6px;background-image:linear-gradient(90deg,transparent 5.6px,#2a2a44 5.6px);background-size:7px 2px;background-position:right 0;background-repeat:repeat-x"></span></div>
<div class="a" style="left:173px;top:50px;width:330px;height:19px;background:#dfe9fb;border:1px solid #cfdcf6;padding-left:2px;font-size:11px;letter-spacing:-0.05px;font-weight:normal;line-height:17px;white-space:nowrap;overflow:hidden;color:#111">2B95241</div>
<div class="a" style="left:485px;top:51px;width:17px;height:17px;background:#d6e3f9;color:#fff;font-size:10px;text-align:center;line-height:19px">···</div>
<div class="a" style="left:11px;top:78px;width:149.5px;height:16px;display:flex;align-items:flex-end;white-space:nowrap;overflow:hidden"><span style="font-size:11px;letter-spacing:-0.35px;color:#1a1a1a;line-height:14px">Registrační značka</span><span style="flex:1;height:2px;margin:0 0 2px 6px;background-image:linear-gradient(90deg,transparent 5.6px,#2a2a44 5.6px);background-size:7px 2px;background-position:right 0;background-repeat:repeat-x"></span></div>
<div class="a" style="left:173px;top:74px;width:330px;height:19px;background:#dfe9fb;border:1px solid #cfdcf6;padding-left:2px;font-size:11px;letter-spacing:-0.05px;font-weight:normal;line-height:17px;white-space:nowrap;overflow:hidden;color:#111">2B95241</div>
<div class="a" style="left:485px;top:75px;width:17px;height:17px;background:#d6e3f9;color:#fff;font-size:10px;text-align:center;line-height:19px">···</div>
<div class="a" style="left:11px;top:102px;width:149.5px;height:16px;display:flex;align-items:flex-end;white-space:nowrap;overflow:hidden"><span style="font-size:11px;letter-spacing:-0.35px;color:#1a1a1a;line-height:14px">Název vozidla</span><span style="flex:1;height:2px;margin:0 0 2px 6px;background-image:linear-gradient(90deg,transparent 5.6px,#2a2a44 5.6px);background-size:7px 2px;background-position:right 0;background-repeat:repeat-x"></span></div>
<div class="a" style="left:173px;top:98px;width:330px;height:19px;background:#dfe9fb;border:1px solid #cfdcf6;padding-left:2px;font-size:11px;letter-spacing:-0.35px;font-weight:normal;line-height:17px;white-space:nowrap;overflow:hidden;color:#111">Seat Ibiza</div>
<div class="a" style="left:11px;top:126px;width:149.5px;height:16px;display:flex;align-items:flex-end;white-space:nowrap;overflow:hidden"><span style="font-size:11px;letter-spacing:-0.35px;color:#1a1a1a;line-height:14px">Připojné vozidlo</span><span style="flex:1;height:2px;margin:0 0 2px 6px;background-image:linear-gradient(90deg,transparent 5.6px,#2a2a44 5.6px);background-size:7px 2px;background-position:right 0;background-repeat:repeat-x"></span></div>
<div class="a" style="left:173px;top:122px;width:330px;height:19px;background:#dfe9fb;border:1px solid #cfdcf6;padding-left:2px;font-size:11px;letter-spacing:-0.35px;font-weight:normal;line-height:17px;white-space:nowrap;overflow:hidden;color:#111"></div>
<div class="a" style="left:485px;top:123px;width:17px;height:17px;background:#d6e3f9;color:#fff;font-size:10px;text-align:center;line-height:19px">···</div>
<div class="a" style="left:11px;top:150px;width:149.5px;height:16px;display:flex;align-items:flex-end;white-space:nowrap;overflow:hidden"><span style="font-size:11px;letter-spacing:-0.35px;color:#1a1a1a;line-height:14px">Registrační značka připojné</span><span style="flex:1;height:2px;margin:0 0 2px 6px;background-image:linear-gradient(90deg,transparent 5.6px,#2a2a44 5.6px);background-size:7px 2px;background-position:right 0;background-repeat:repeat-x"></span></div>
<div class="a" style="left:173px;top:146px;width:330px;height:19px;background:#dfe9fb;border:1px solid #cfdcf6;padding-left:2px;font-size:11px;letter-spacing:-0.35px;font-weight:normal;line-height:17px;white-space:nowrap;overflow:hidden;color:#111"></div>
<div class="a" style="left:11px;top:174px;width:149.5px;height:16px;display:flex;align-items:flex-end;white-space:nowrap;overflow:hidden"><span style="font-size:11px;letter-spacing:-0.35px;color:#1a1a1a;line-height:14px">Název připojného vozidla</span><span style="flex:1;height:2px;margin:0 0 2px 6px;background-image:linear-gradient(90deg,transparent 5.6px,#2a2a44 5.6px);background-size:7px 2px;background-position:right 0;background-repeat:repeat-x"></span></div>
<div class="a" style="left:173px;top:170px;width:330px;height:19px;background:#dfe9fb;border:1px solid #cfdcf6;padding-left:2px;font-size:11px;letter-spacing:-0.35px;font-weight:normal;line-height:17px;white-space:nowrap;overflow:hidden;color:#111"></div>
<div class="a" style="left:11px;top:198px;width:149.5px;height:16px;display:flex;align-items:flex-end;white-space:nowrap;overflow:hidden"><span style="font-size:11px;letter-spacing:-0.35px;color:#1a1a1a;line-height:14px">Vlastní číslo dokladu</span><span style="flex:1;height:2px;margin:0 0 2px 6px;background-image:linear-gradient(90deg,transparent 5.6px,#2a2a44 5.6px);background-size:7px 2px;background-position:right 0;background-repeat:repeat-x"></span></div>
<div class="a" style="left:173px;top:194px;width:330px;height:19px;background:#fff;border:1px solid #c9d9f3;padding-left:2px;font-size:11px;letter-spacing:-0.35px;font-weight:normal;line-height:17px;white-space:nowrap;overflow:hidden;color:#111"></div>
<div class="a" style="left:11px;top:222px;width:149.5px;height:16px;display:flex;align-items:flex-end;white-space:nowrap;overflow:hidden"><span style="font-size:11px;letter-spacing:-0.35px;color:#1a1a1a;line-height:14px">Vykazující osoba</span><span style="flex:1;height:2px;margin:0 0 2px 6px;background-image:linear-gradient(90deg,transparent 5.6px,#2a2a44 5.6px);background-size:7px 2px;background-position:right 0;background-repeat:repeat-x"></span></div>
<div class="a" style="left:173px;top:218px;width:330px;height:19px;background:#dfe9fb;border:1px solid #cfdcf6;padding-left:2px;font-size:11px;letter-spacing:-0.35px;font-weight:normal;line-height:17px;white-space:nowrap;overflow:hidden;color:#111">Svoboda Josef</div>
<div class="a" style="left:11px;top:246px;width:149.5px;height:16px;display:flex;align-items:flex-end;white-space:nowrap;overflow:hidden"><span style="font-size:11px;letter-spacing:-0.35px;color:#1a1a1a;line-height:14px">Druhá vykazující osoba</span><span style="flex:1;height:2px;margin:0 0 2px 6px;background-image:linear-gradient(90deg,transparent 5.6px,#2a2a44 5.6px);background-size:7px 2px;background-position:right 0;background-repeat:repeat-x"></span></div>
<div class="a" style="left:173px;top:242px;width:330px;height:19px;background:#fff;border:1px solid #c9d9f3;padding-left:2px;font-size:11px;letter-spacing:-0.35px;font-weight:normal;line-height:17px;white-space:nowrap;overflow:hidden;color:#111"></div>
<div class="a" style="left:11px;top:270px;width:149.5px;height:16px;display:flex;align-items:flex-end;white-space:nowrap;overflow:hidden"><span style="font-size:11px;letter-spacing:-0.35px;color:#1a1a1a;line-height:14px">Hospodářské středisko</span><span style="flex:1;height:2px;margin:0 0 2px 6px;background-image:linear-gradient(90deg,transparent 5.6px,#2a2a44 5.6px);background-size:7px 2px;background-position:right 0;background-repeat:repeat-x"></span></div>
<div class="a" style="left:173px;top:266px;width:330px;height:19px;background:#fff;border:1px solid #c9d9f3;padding-left:2px;font-size:11px;letter-spacing:-0.35px;font-weight:normal;line-height:17px;white-space:nowrap;overflow:hidden;color:#111"></div>
<div class="a" style="left:11px;top:294px;width:149.5px;height:16px;display:flex;align-items:flex-end;white-space:nowrap;overflow:hidden"><span style="font-size:11px;letter-spacing:-0.35px;color:#1a1a1a;line-height:14px">Název hospodářského střediska</span><span style="flex:1;height:2px;margin:0 0 2px 6px;background-image:linear-gradient(90deg,transparent 5.6px,#2a2a44 5.6px);background-size:7px 2px;background-position:right 0;background-repeat:repeat-x"></span></div>
<div class="a" style="left:173px;top:290px;width:330px;height:19px;background:#dfe9fb;border:1px solid #cfdcf6;padding-left:2px;font-size:11px;letter-spacing:-0.35px;font-weight:normal;line-height:17px;white-space:nowrap;overflow:hidden;color:#111"></div>
<div class="a" style="left:11px;top:318px;width:149.5px;height:16px;display:flex;align-items:flex-end;white-space:nowrap;overflow:hidden"><span style="font-size:11px;letter-spacing:-0.35px;color:#1a1a1a;line-height:14px">Útvar</span><span style="flex:1;height:2px;margin:0 0 2px 6px;background-image:linear-gradient(90deg,transparent 5.6px,#2a2a44 5.6px);background-size:7px 2px;background-position:right 0;background-repeat:repeat-x"></span></div>
<div class="a" style="left:173px;top:314px;width:330px;height:19px;background:#fff;border:1px solid #c9d9f3;padding-left:2px;font-size:11px;letter-spacing:-0.35px;font-weight:normal;line-height:17px;white-space:nowrap;overflow:hidden;color:#111"></div>
</div>
<div class="a" style="left:926px;top:367px;width:17px;height:560px;background:#d3e0ee"></div>
<div class="a" style="left:926px;top:367px;width:17px;height:18px;background:#4b83b5"></div>
<svg style="left:930px;top:373px" width="9" height="6"><path d="M0.5 5 L4.5 1 L8.5 5" fill="none" stroke="#fff" stroke-width="1.5"/></svg>
<div class="a" style="left:951px;top:347px;width:404px;height:580px;background:#f7fbff;border:1px solid #cbdcf2"></div>
<div class="a" style="left:951px;top:326px;width:100px;height:22px;background:#f7fbff;border:1px solid #cbdcf2;border-bottom:none"></div>
<div class="t" style="left:958px;top:330px;font-size:11px;letter-spacing:-0.35px;color:#333">Obchodní partner</div>
<div class="t" style="left:1054px;top:331px;font-size:11px;letter-spacing:-0.35px;color:#1a1a1a">Poznámky</div>
<div class="a" style="left:962px;top:363px;width:125.5px;height:16px;display:flex;align-items:flex-end;white-space:nowrap;overflow:hidden"><span style="font-size:11px;letter-spacing:-0.35px;color:#1a1a1a;line-height:14px">Kód partnera</span><span style="flex:1;height:2px;margin:0 0 2px 6px;background-image:linear-gradient(90deg,transparent 5.6px,#2a2a44 5.6px);background-size:7px 2px;background-position:right 0;background-repeat:repeat-x"></span></div>
<div class="a" style="left:1100px;top:359px;width:242px;height:19px;background:#fff;border:1px solid #c9d9f3;padding-left:2px;font-size:11px;letter-spacing:-0.35px;font-weight:normal;line-height:17px;white-space:nowrap;overflow:hidden;color:#111"></div>
<div class="t" style="left:1327px;top:360px;font-size:13px;font-weight:bold;color:#111;letter-spacing:-1px">···</div>
<div class="a" style="left:962px;top:387px;width:125.5px;height:16px;display:flex;align-items:flex-end;white-space:nowrap;overflow:hidden"><span style="font-size:11px;letter-spacing:-0.35px;color:#1a1a1a;line-height:14px">Obchodní partner</span><span style="flex:1;height:2px;margin:0 0 2px 6px;background-image:linear-gradient(90deg,transparent 5.6px,#2a2a44 5.6px);background-size:7px 2px;background-position:right 0;background-repeat:repeat-x"></span></div>
<div class="a" style="left:1100px;top:383px;width:242px;height:19px;background:#fff;border:1px solid #c9d9f3;padding-left:2px;font-size:11px;letter-spacing:-0.35px;font-weight:normal;line-height:17px;white-space:nowrap;overflow:hidden;color:#111"></div>
<div class="t" style="left:1327px;top:384px;font-size:13px;font-weight:bold;color:#111;letter-spacing:-1px">···</div>
<div class="a" style="left:962px;top:411px;width:125.5px;height:16px;display:flex;align-items:flex-end;white-space:nowrap;overflow:hidden"><span style="font-size:11px;letter-spacing:-0.35px;color:#1a1a1a;line-height:14px">Ulice</span><span style="flex:1;height:2px;margin:0 0 2px 6px;background-image:linear-gradient(90deg,transparent 5.6px,#2a2a44 5.6px);background-size:7px 2px;background-position:right 0;background-repeat:repeat-x"></span></div>
<div class="a" style="left:1100px;top:407px;width:242px;height:19px;background:#dfe9fb;border:1px solid #cfdcf6;padding-left:2px;font-size:11px;letter-spacing:-0.35px;font-weight:normal;line-height:17px;white-space:nowrap;overflow:hidden;color:#111"></div>
<div class="a" style="left:962px;top:435px;width:125.5px;height:16px;display:flex;align-items:flex-end;white-space:nowrap;overflow:hidden"><span style="font-size:11px;letter-spacing:-0.35px;color:#1a1a1a;line-height:14px">Obec</span><span style="flex:1;height:2px;margin:0 0 2px 6px;background-image:linear-gradient(90deg,transparent 5.6px,#2a2a44 5.6px);background-size:7px 2px;background-position:right 0;background-repeat:repeat-x"></span></div>
<div class="a" style="left:1100px;top:431px;width:242px;height:19px;background:#dfe9fb;border:1px solid #cfdcf6;padding-left:2px;font-size:11px;letter-spacing:-0.35px;font-weight:normal;line-height:17px;white-space:nowrap;overflow:hidden;color:#111"></div>
<div class="a" style="left:962px;top:459px;width:125.5px;height:16px;display:flex;align-items:flex-end;white-space:nowrap;overflow:hidden"><span style="font-size:11px;letter-spacing:-0.35px;color:#1a1a1a;line-height:14px">PSČ</span><span style="flex:1;height:2px;margin:0 0 2px 6px;background-image:linear-gradient(90deg,transparent 5.6px,#2a2a44 5.6px);background-size:7px 2px;background-position:right 0;background-repeat:repeat-x"></span></div>
<div class="a" style="left:1100px;top:455px;width:242px;height:19px;background:#dfe9fb;border:1px solid #cfdcf6;padding-left:2px;font-size:11px;letter-spacing:-0.35px;font-weight:normal;line-height:17px;white-space:nowrap;overflow:hidden;color:#111"></div>
<div class="a" style="left:962px;top:483px;width:125.5px;height:16px;display:flex;align-items:flex-end;white-space:nowrap;overflow:hidden"><span style="font-size:11px;letter-spacing:-0.35px;color:#1a1a1a;line-height:14px">Stát</span><span style="flex:1;height:2px;margin:0 0 2px 6px;background-image:linear-gradient(90deg,transparent 5.6px,#2a2a44 5.6px);background-size:7px 2px;background-position:right 0;background-repeat:repeat-x"></span></div>
<div class="a" style="left:1100px;top:479px;width:242px;height:19px;background:#dfe9fb;border:1px solid #cfdcf6;padding-left:2px;font-size:11px;letter-spacing:-0.35px;font-weight:normal;line-height:17px;white-space:nowrap;overflow:hidden;color:#111"></div>
<div class="a" style="left:433px;top:751px;width:149.5px;height:16px;display:flex;align-items:flex-end;white-space:nowrap;overflow:hidden"><span style="font-size:11px;letter-spacing:-0.35px;color:#1a1a1a;line-height:14px">Počáteční stav počítadla</span><span style="flex:1;height:2px;margin:0 0 2px 6px;background-image:linear-gradient(90deg,transparent 5.6px,#2a2a44 5.6px);background-size:7px 2px;background-position:right 0;background-repeat:repeat-x"></span></div>
<div class="a" style="left:595px;top:747px;width:78px;height:19px;background:#dafbb6;border:1px solid #cde6c0;padding-right:2px;text-align:right;font-size:11px;letter-spacing:-0.05px;font-weight:normal;line-height:17px;white-space:nowrap;overflow:hidden;color:#111">120 981</div>
<div class="a" style="left:433px;top:775px;width:149.5px;height:16px;display:flex;align-items:flex-end;white-space:nowrap;overflow:hidden"><span style="font-size:11px;letter-spacing:-0.35px;color:#1a1a1a;line-height:14px">Výkon za provoz</span><span style="flex:1;height:2px;margin:0 0 2px 6px;background-image:linear-gradient(90deg,transparent 5.6px,#2a2a44 5.6px);background-size:7px 2px;background-position:right 0;background-repeat:repeat-x"></span></div>
<div class="a" style="left:595px;top:771px;width:78px;height:19px;background:#dfe9fb;border:1px solid #cfdcf6;padding-right:2px;text-align:right;font-size:11px;letter-spacing:-0.058px;font-weight:normal;line-height:17px;white-space:nowrap;overflow:hidden;color:#111">408,00</div>
<div class="a" style="left:433px;top:799px;width:149.5px;height:16px;display:flex;align-items:flex-end;white-space:nowrap;overflow:hidden"><span style="font-size:11px;letter-spacing:-0.35px;color:#1a1a1a;line-height:14px">Konečný stav počítadla</span><span style="flex:1;height:2px;margin:0 0 2px 6px;background-image:linear-gradient(90deg,transparent 5.6px,#2a2a44 5.6px);background-size:7px 2px;background-position:right 0;background-repeat:repeat-x"></span></div>
<div class="a" style="left:595px;top:795px;width:78px;height:19px;background:#dfe9fb;border:1px solid #cfdcf6;padding-right:2px;text-align:right;font-size:11px;letter-spacing:-0.05px;font-weight:normal;line-height:17px;white-space:nowrap;overflow:hidden;color:#111">121 389</div>
<div class="a" style="left:433px;top:823px;width:149.5px;height:16px;display:flex;align-items:flex-end;white-space:nowrap;overflow:hidden"><span style="font-size:11px;letter-spacing:-0.35px;color:#1a1a1a;line-height:14px">Konečný stav počítadla cílový</span><span style="flex:1;height:2px;margin:0 0 2px 6px;background-image:linear-gradient(90deg,transparent 5.6px,#2a2a44 5.6px);background-size:7px 2px;background-position:right 0;background-repeat:repeat-x"></span></div>
<div class="a" style="left:595px;top:819px;width:78px;height:19px;background:#fff;border:1px solid #c9d9f3;padding-right:2px;text-align:right;font-size:11px;letter-spacing:-0.078px;font-weight:normal;line-height:17px;white-space:nowrap;overflow:hidden;color:#111">121 389,0</div>
<div class="a" style="left:433px;top:847px;width:149.5px;height:16px;display:flex;align-items:flex-end;white-space:nowrap;overflow:hidden"><span style="font-size:11px;letter-spacing:-0.35px;color:#1a1a1a;line-height:14px">Zbývá vykázat</span><span style="flex:1;height:2px;margin:0 0 2px 6px;background-image:linear-gradient(90deg,transparent 5.6px,#2a2a44 5.6px);background-size:7px 2px;background-position:right 0;background-repeat:repeat-x"></span></div>
<div class="a" style="left:595px;top:843px;width:78px;height:19px;background:#dfe9fb;border:1px solid #cfdcf6;padding-right:2px;text-align:right;font-size:11px;letter-spacing:0.0px;font-weight:normal;line-height:17px;white-space:nowrap;overflow:hidden;color:#888">0</div>
<div class="a" style="left:433px;top:871px;width:149.5px;height:16px;display:flex;align-items:flex-end;white-space:nowrap;overflow:hidden"><span style="font-size:11px;letter-spacing:-0.35px;color:#1a1a1a;line-height:14px">Spotřeba PHm - agregát</span><span style="flex:1;height:2px;margin:0 0 2px 6px;background-image:linear-gradient(90deg,transparent 5.6px,#2a2a44 5.6px);background-size:7px 2px;background-position:right 0;background-repeat:repeat-x"></span></div>
<div class="a" style="left:595px;top:867px;width:78px;height:19px;background:#dfe9fb;border:1px solid #cfdcf6;padding-right:2px;text-align:right;font-size:11px;letter-spacing:-0.07px;font-weight:normal;line-height:17px;white-space:nowrap;overflow:hidden;color:#111">24,57</div>
<div class="a" style="left:433px;top:895px;width:149.5px;height:16px;display:flex;align-items:flex-end;white-space:nowrap;overflow:hidden"><span style="font-size:11px;letter-spacing:-0.35px;color:#1a1a1a;line-height:14px">Vykázaný čas celkem</span><span style="flex:1;height:2px;margin:0 0 2px 6px;background-image:linear-gradient(90deg,transparent 5.6px,#2a2a44 5.6px);background-size:7px 2px;background-position:right 0;background-repeat:repeat-x"></span></div>
<div class="a" style="left:595px;top:891px;width:78px;height:19px;background:#dfe9fb;border:1px solid #cfdcf6;padding-right:2px;text-align:right;font-size:11px;letter-spacing:-0.088px;font-weight:normal;line-height:17px;white-space:nowrap;overflow:hidden;color:#111">5,71</div>
<div class="a" style="left:682px;top:493px;width:913px;height:507px;background:#fff;border:1px solid #3a74ad;border-top:none"></div>
<div class="a" style="left:682px;top:493px;width:913px;height:28px;background:#1e4667"></div>
<svg style="left:688px;top:499px" width="16" height="16"><path d="M1 1 L15 8 L1 15Z" fill="#fff" stroke="#fff"/><path d="M3.5 12.5 L12 8.5" stroke="#a0a0a0" stroke-width="1.4" opacity="1"/></svg>
<div class="t" style="left:708px;top:500px;font-size:11.8px;font-weight:bold;color:#fff">Výkaz provozních událostí</div>
<div class="t" style="left:1451px;width:60px;text-align:right;top:500px;font-size:12px;font-weight:bold;color:#fff;-webkit-text-stroke:0.4px currentColor;font-family:'Liberation Serif',serif">19</div>
<svg style="left:1521px;top:502.5px" width="64" height="12"><path d="M1 5 H11" stroke="#fff" stroke-width="1.2"/><rect x="25.75" y="0.75" width="9.5" height="9.5" fill="none" stroke="#fff" stroke-width="1.2"/><path d="M50.5 0.5 L60.5 10.5 M60.5 0.5 L50.5 10.5" stroke="#fff" stroke-width="1.3"/></svg>
<div class="t" style="left:693.5px;top:529px;font-size:11px;letter-spacing:-0.35px;color:#1a1a1a">Evidenční číslo dokladu</div>
<div class="t" style="left:829.5px;top:529px;font-size:11px;letter-spacing:-0.35px;color:#1a1a1a">Období od</div>
<div class="t" style="left:937.5px;top:529px;font-size:11px;letter-spacing:-0.35px;color:#1a1a1a">Období do</div>
<div class="t" style="left:1045.5px;top:529px;font-size:11px;letter-spacing:-0.35px;color:#1a1a1a">Identifikace vozidla</div>
<div class="t" style="left:1153.5px;top:529px;font-size:11px;letter-spacing:-0.35px;color:#1a1a1a">Název vozidla</div>
<div class="a" style="left:695px;top:547px;width:126px;height:19px;background:#dfe9fb;border:1px solid #cfdcf6;padding-left:2px;font-size:11.5px;letter-spacing:0.45px;font-weight:bold;line-height:17px;white-space:nowrap;overflow:hidden;color:#111">ZPVV-2017-000004</div>
<div class="a" style="left:831px;top:547px;width:98px;height:19px;background:#dfe9fb;border:1px solid #cfdcf6;padding-left:2px;font-size:11px;letter-spacing:-0.1px;font-weight:normal;line-height:17px;white-space:nowrap;overflow:hidden;color:#111">8.11.2017 5:17</div>
<div class="a" style="left:939px;top:547px;width:98px;height:19px;background:#dfe9fb;border:1px solid #cfdcf6;padding-left:2px;font-size:11px;letter-spacing:-0.093px;font-weight:normal;line-height:17px;white-space:nowrap;overflow:hidden;color:#111">8.11.2017 18:17</div>
<div class="a" style="left:1047px;top:547px;width:98px;height:19px;background:#dfe9fb;border:1px solid #cfdcf6;padding-left:2px;font-size:11.5px;letter-spacing:0.45px;font-weight:bold;line-height:17px;white-space:nowrap;overflow:hidden;color:#111">2B95241</div>
<div class="a" style="left:1155px;top:547px;width:287px;height:19px;background:#dfe9fb;border:1px solid #cfdcf6;padding-left:2px;font-size:11px;letter-spacing:-0.35px;font-weight:normal;line-height:17px;white-space:nowrap;overflow:hidden;color:#111">Seat Ibiza</div>
<div class="a" style="left:1455px;top:546px;width:128px;height:21px;background:#4b83b5;color:#fff;font-size:11px;letter-spacing:-0.3px;text-align:center;line-height:23px;white-space:nowrap">Karta zařízení</div>
<div class="a" style="left:1455px;top:601px;width:128px;height:21px;background:#4b83b5;color:#8db0d2;font-size:11px;letter-spacing:-0.3px;text-align:center;line-height:23px;white-space:nowrap">Zobrazení akce</div>
<div class="a" style="left:1455px;top:629px;width:128px;height:21px;background:#4b83b5;color:#fff;font-size:11px;letter-spacing:-0.3px;text-align:center;line-height:23px;white-space:nowrap">Karta místa</div>
<div class="a" style="left:1455px;top:657px;width:128px;height:21px;background:#4b83b5;color:#fff;font-size:11px;letter-spacing:-0.3px;text-align:center;line-height:23px;white-space:nowrap">Výkaz provozu</div>
<div class="a" style="left:1455px;top:685px;width:128px;height:21px;background:#4b83b5;color:#8db0d2;font-size:11px;letter-spacing:-0.3px;text-align:center;line-height:23px;white-space:nowrap">Sloučené události</div>
<div class="a" style="left:1455px;top:713px;width:128px;height:21px;background:#4b83b5;color:#fff;font-size:11px;letter-spacing:-0.3px;text-align:center;line-height:23px;white-space:nowrap">Načtení událostí</div>
<div class="a" style="left:694px;top:601px;width:749px;height:293px;background:#f7fbff;border:1px solid #cbdcf2"></div>
<div class="a" style="left:695px;top:581px;width:52px;height:21px;background:#f7fbff;border:1px solid #cbdcf2;border-bottom:none"></div>
<div class="t" style="left:701px;top:584px;font-size:11px;letter-spacing:-0.35px;color:#333">Seznam</div>
<div class="t" style="left:750px;top:585px;font-size:11px;letter-spacing:-0.35px;color:#1a1a1a">Poznámka</div>
<div class="a" style="left:707px;top:614px;width:722px;height:268px;background:#fff;border:1px solid #cfdff5"></div>
<div class="a" style="left:708px;top:615px;width:704px;height:36px;background:linear-gradient(#fff,#eef4fb)"></div>
<div class="t" style="left:711px;top:618px;font-size:11px;letter-spacing:-0.35px;line-height:12.5px;color:#1a1a1a">Kód<br>událostí</div>
<div class="t" style="left:754px;top:618px;font-size:11px;letter-spacing:-0.35px;line-height:12.5px;color:#1a1a1a">Název<br>událostí</div>
<div class="t" style="left:824px;top:618px;font-size:11px;letter-spacing:-0.35px;line-height:12.5px;color:#1a1a1a">Datum zahájení<br></div>
<div class="t" style="left:903px;top:618px;font-size:11px;letter-spacing:-0.35px;line-height:12.5px;color:#1a1a1a">Čas zahájení<br></div>
<div class="t" style="left:969px;top:618px;font-size:11px;letter-spacing:-0.35px;line-height:12.5px;color:#1a1a1a">Datum ukončení<br></div>
<div class="t" style="left:1050px;top:618px;font-size:11px;letter-spacing:-0.35px;line-height:12.5px;color:#1a1a1a">Čas ukončení<br></div>
<div class="t" style="left:1119px;top:618px;font-size:11px;letter-spacing:-0.35px;line-height:12.5px;color:#1a1a1a">Výkon<br></div>
<div class="t" style="left:1183px;top:618px;font-size:11px;letter-spacing:-0.35px;line-height:12.5px;color:#1a1a1a">MJ<br>výkonu</div>
<div class="t" style="left:1225px;top:618px;font-size:11px;letter-spacing:-0.35px;line-height:12.5px;color:#1a1a1a">Doba<br></div>
<div class="t" style="left:1262px;top:618px;font-size:11px;letter-spacing:-0.35px;line-height:12.5px;color:#1a1a1a">MJ<br>času</div>
<div class="t" style="left:1293px;top:618px;font-size:11px;letter-spacing:-0.35px;line-height:12.5px;color:#1a1a1a">Místo konání<br></div>
<div class="a" style="left:708px;top:651px;width:43px;height:18px;background:#024870;color:#fff;font-size:11px;letter-spacing:-0.35px;line-height:18px;white-space:nowrap;overflow:hidden;padding-left:2px;border-right:1px solid #fff">J</div>
<div class="a" style="left:751px;top:651px;width:70px;height:18px;background:#024870;color:#fff;font-size:11px;letter-spacing:-0.35px;line-height:18px;white-space:nowrap;overflow:hidden;padding-left:2px;border-right:1px solid #fff">Jízda služební</div>
<div class="a" style="left:821px;top:651px;width:79px;height:18px;background:#024870;color:#fff;font-size:11px;letter-spacing:-0.07px;line-height:18px;white-space:nowrap;overflow:hidden;padding-left:2px;border-right:1px solid #fff">08.11.2017</div>
<div class="a" style="left:900px;top:651px;width:66px;height:18px;background:#024870;color:#fff;font-size:11px;letter-spacing:-0.07px;line-height:18px;white-space:nowrap;overflow:hidden;padding-left:2px;border-right:1px solid #fff">05:17</div>
<div class="a" style="left:966px;top:651px;width:81px;height:18px;background:#024870;color:#fff;font-size:11px;letter-spacing:-0.07px;line-height:18px;white-space:nowrap;overflow:hidden;padding-left:2px;border-right:1px solid #fff">08.11.2017</div>
<div class="a" style="left:1047px;top:651px;width:69px;height:18px;background:#024870;color:#fff;font-size:11px;letter-spacing:-0.07px;line-height:18px;white-space:nowrap;overflow:hidden;padding-left:2px;border-right:1px solid #fff">08:00</div>
<div class="a" style="left:1116px;top:651px;width:64px;height:18px;background:#024870;color:#fff;font-size:11px;letter-spacing:-0.058px;line-height:18px;white-space:nowrap;overflow:hidden;text-align:right;padding-right:2px;border-right:1px solid #fff">257,00</div>
<div class="a" style="left:1180px;top:651px;width:42px;height:18px;background:#024870;color:#fff;font-size:11px;letter-spacing:-0.35px;line-height:18px;white-space:nowrap;overflow:hidden;padding-left:2px;border-right:1px solid #fff">km</div>
<div class="a" style="left:1222px;top:651px;width:37px;height:18px;background:#024870;color:#fff;font-size:11px;letter-spacing:-0.088px;line-height:18px;white-space:nowrap;overflow:hidden;text-align:right;padding-right:2px;border-right:1px solid #fff">2,71</div>
<div class="a" style="left:1259px;top:651px;width:31px;height:18px;background:#024870;color:#fff;font-size:11px;letter-spacing:-0.35px;line-height:18px;white-space:nowrap;overflow:hidden;padding-left:2px;border-right:1px solid #fff">hod</div>
<div class="a" style="left:1290px;top:651px;width:122px;height:18px;background:#024870;color:#fff;font-size:11px;letter-spacing:-0.274px;line-height:18px;white-space:nowrap;overflow:hidden;padding-left:2px;border-right:1px solid #fff">Jalubí » Petříkov,00320</div>
<div class="a" style="left:708px;top:669px;width:43px;height:18px;background:#f5f9fe;color:#111;font-size:11px;letter-spacing:-0.35px;line-height:18px;white-space:nowrap;overflow:hidden;padding-left:2px;border-right:1px solid #fff">ST</div>
<div class="a" style="left:751px;top:669px;width:70px;height:18px;background:#c2fb86;color:#111;font-size:11px;letter-spacing:-0.35px;line-height:18px;white-space:nowrap;overflow:hidden;padding-left:2px;border-right:1px solid #fff">Stání</div>
<div class="a" style="left:821px;top:669px;width:79px;height:18px;background:#c2fb86;color:#111;font-size:11px;letter-spacing:-0.07px;line-height:18px;white-space:nowrap;overflow:hidden;padding-left:2px;border-right:1px solid #fff">08.11.2017</div>
<div class="a" style="left:900px;top:669px;width:66px;height:18px;background:#c2fb86;color:#111;font-size:11px;letter-spacing:-0.07px;line-height:18px;white-space:nowrap;overflow:hidden;padding-left:2px;border-right:1px solid #fff">08:00</div>
<div class="a" style="left:966px;top:669px;width:81px;height:18px;background:#c2fb86;color:#111;font-size:11px;letter-spacing:-0.07px;line-height:18px;white-space:nowrap;overflow:hidden;padding-left:2px;border-right:1px solid #fff">08.11.2017</div>
<div class="a" style="left:1047px;top:669px;width:69px;height:18px;background:#c2fb86;color:#111;font-size:11px;letter-spacing:-0.07px;line-height:18px;white-space:nowrap;overflow:hidden;padding-left:2px;border-right:1px solid #fff">08:11</div>
<div class="a" style="left:1116px;top:669px;width:64px;height:18px;background:#c2fb86;color:#111;font-size:11px;letter-spacing:-0.088px;line-height:18px;white-space:nowrap;overflow:hidden;text-align:right;padding-right:2px;border-right:1px solid #fff">0,19</div>
<div class="a" style="left:1180px;top:669px;width:42px;height:18px;background:#c9dcfb;color:#111;font-size:11px;letter-spacing:-0.35px;line-height:18px;white-space:nowrap;overflow:hidden;padding-left:2px;border-right:1px solid #fff">hod</div>
<div class="a" style="left:1222px;top:669px;width:37px;height:18px;background:#c9dcfb;color:#111;font-size:11px;letter-spacing:-0.35px;line-height:18px;white-space:nowrap;overflow:hidden;text-align:right;padding-right:2px;border-right:1px solid #fff"></div>
<div class="a" style="left:1259px;top:669px;width:31px;height:18px;background:#c9dcfb;color:#111;font-size:11px;letter-spacing:-0.35px;line-height:18px;white-space:nowrap;overflow:hidden;padding-left:2px;border-right:1px solid #fff"></div>
<div class="a" style="left:1290px;top:669px;width:122px;height:18px;background:#c2fb86;color:#111;font-size:11px;letter-spacing:-0.225px;line-height:18px;white-space:nowrap;overflow:hidden;padding-left:2px;border-right:1px solid #fff">Petříkov,00320</div>
<div class="a" style="left:708px;top:687px;width:43px;height:18px;background:#ffffff;color:#111;font-size:11px;letter-spacing:-0.35px;line-height:18px;white-space:nowrap;overflow:hidden;padding-left:2px;border-right:1px solid #fff">J</div>
<div class="a" style="left:751px;top:687px;width:70px;height:18px;background:#dcfdb8;color:#111;font-size:11px;letter-spacing:-0.35px;line-height:18px;white-space:nowrap;overflow:hidden;padding-left:2px;border-right:1px solid #fff">Jízda služební</div>
<div class="a" style="left:821px;top:687px;width:79px;height:18px;background:#dcfdb8;color:#111;font-size:11px;letter-spacing:-0.07px;line-height:18px;white-space:nowrap;overflow:hidden;padding-left:2px;border-right:1px solid #fff">08.11.2017</div>
<div class="a" style="left:900px;top:687px;width:66px;height:18px;background:#dcfdb8;color:#111;font-size:11px;letter-spacing:-0.07px;line-height:18px;white-space:nowrap;overflow:hidden;padding-left:2px;border-right:1px solid #fff">08:11</div>
<div class="a" style="left:966px;top:687px;width:81px;height:18px;background:#dcfdb8;color:#111;font-size:11px;letter-spacing:-0.07px;line-height:18px;white-space:nowrap;overflow:hidden;padding-left:2px;border-right:1px solid #fff">08.11.2017</div>
<div class="a" style="left:1047px;top:687px;width:69px;height:18px;background:#dcfdb8;color:#111;font-size:11px;letter-spacing:-0.07px;line-height:18px;white-space:nowrap;overflow:hidden;padding-left:2px;border-right:1px solid #fff">09:07</div>
<div class="a" style="left:1116px;top:687px;width:64px;height:18px;background:#dcfdb8;color:#111;font-size:11px;letter-spacing:-0.07px;line-height:18px;white-space:nowrap;overflow:hidden;text-align:right;padding-right:2px;border-right:1px solid #fff">34,00</div>
<div class="a" style="left:1180px;top:687px;width:42px;height:18px;background:#deebfd;color:#111;font-size:11px;letter-spacing:-0.35px;line-height:18px;white-space:nowrap;overflow:hidden;padding-left:2px;border-right:1px solid #fff">km</div>
<div class="a" style="left:1222px;top:687px;width:37px;height:18px;background:#ffffff;color:#111;font-size:11px;letter-spacing:-0.088px;line-height:18px;white-space:nowrap;overflow:hidden;text-align:right;padding-right:2px;border-right:1px solid #fff">0,93</div>
<div class="a" style="left:1259px;top:687px;width:31px;height:18px;background:#deebfd;color:#111;font-size:11px;letter-spacing:-0.35px;line-height:18px;white-space:nowrap;overflow:hidden;padding-left:2px;border-right:1px solid #fff">hod</div>
<div class="a" style="left:1290px;top:687px;width:122px;height:18px;background:#dcfdb8;color:#111;font-size:11px;letter-spacing:-0.292px;line-height:18px;white-space:nowrap;overflow:hidden;padding-left:2px;border-right:1px solid #fff">Petříkov,00320 » Libeň,Bulovka</div>
<div class="a" style="left:708px;top:705px;width:43px;height:18px;background:#f5f9fe;color:#111;font-size:11px;letter-spacing:-0.35px;line-height:18px;white-space:nowrap;overflow:hidden;padding-left:2px;border-right:1px solid #fff">ST</div>
<div class="a" style="left:751px;top:705px;width:70px;height:18px;background:#c2fb86;color:#111;font-size:11px;letter-spacing:-0.35px;line-height:18px;white-space:nowrap;overflow:hidden;padding-left:2px;border-right:1px solid #fff">Stání</div>
<div class="a" style="left:821px;top:705px;width:79px;height:18px;background:#c2fb86;color:#111;font-size:11px;letter-spacing:-0.07px;line-height:18px;white-space:nowrap;overflow:hidden;padding-left:2px;border-right:1px solid #fff">08.11.2017</div>
<div class="a" style="left:900px;top:705px;width:66px;height:18px;background:#c2fb86;color:#111;font-size:11px;letter-spacing:-0.07px;line-height:18px;white-space:nowrap;overflow:hidden;padding-left:2px;border-right:1px solid #fff">09:07</div>
<div class="a" style="left:966px;top:705px;width:81px;height:18px;background:#c2fb86;color:#111;font-size:11px;letter-spacing:-0.07px;line-height:18px;white-space:nowrap;overflow:hidden;padding-left:2px;border-right:1px solid #fff">08.11.2017</div>
<div class="a" style="left:1047px;top:705px;width:69px;height:18px;background:#c2fb86;color:#111;font-size:11px;letter-spacing:-0.07px;line-height:18px;white-space:nowrap;overflow:hidden;padding-left:2px;border-right:1px solid #fff">09:17</div>
<div class="a" style="left:1116px;top:705px;width:64px;height:18px;background:#c2fb86;color:#111;font-size:11px;letter-spacing:-0.088px;line-height:18px;white-space:nowrap;overflow:hidden;text-align:right;padding-right:2px;border-right:1px solid #fff">0,17</div>
<div class="a" style="left:1180px;top:705px;width:42px;height:18px;background:#c9dcfb;color:#111;font-size:11px;letter-spacing:-0.35px;line-height:18px;white-space:nowrap;overflow:hidden;padding-left:2px;border-right:1px solid #fff">hod</div>
<div class="a" style="left:1222px;top:705px;width:37px;height:18px;background:#c9dcfb;color:#111;font-size:11px;letter-spacing:-0.35px;line-height:18px;white-space:nowrap;overflow:hidden;text-align:right;padding-right:2px;border-right:1px solid #fff"></div>
<div class="a" style="left:1259px;top:705px;width:31px;height:18px;background:#c9dcfb;color:#111;font-size:11px;letter-spacing:-0.35px;line-height:18px;white-space:nowrap;overflow:hidden;padding-left:2px;border-right:1px solid #fff"></div>
<div class="a" style="left:1290px;top:705px;width:122px;height:18px;background:#c2fb86;color:#111;font-size:11px;letter-spacing:-0.35px;line-height:18px;white-space:nowrap;overflow:hidden;padding-left:2px;border-right:1px solid #fff">Libeň,Bulovka</div>
<div class="a" style="left:708px;top:723px;width:43px;height:18px;background:#ffffff;color:#111;font-size:11px;letter-spacing:-0.35px;line-height:18px;white-space:nowrap;overflow:hidden;padding-left:2px;border-right:1px solid #fff">J</div>
<div class="a" style="left:751px;top:723px;width:70px;height:18px;background:#dcfdb8;color:#111;font-size:11px;letter-spacing:-0.35px;line-height:18px;white-space:nowrap;overflow:hidden;padding-left:2px;border-right:1px solid #fff">Jízda služební</div>
<div class="a" style="left:821px;top:723px;width:79px;height:18px;background:#dcfdb8;color:#111;font-size:11px;letter-spacing:-0.07px;line-height:18px;white-space:nowrap;overflow:hidden;padding-left:2px;border-right:1px solid #fff">08.11.2017</div>
<div class="a" style="left:900px;top:723px;width:66px;height:18px;background:#dcfdb8;color:#111;font-size:11px;letter-spacing:-0.07px;line-height:18px;white-space:nowrap;overflow:hidden;padding-left:2px;border-right:1px solid #fff">09:17</div>
<div class="a" style="left:966px;top:723px;width:81px;height:18px;background:#dcfdb8;color:#111;font-size:11px;letter-spacing:-0.07px;line-height:18px;white-space:nowrap;overflow:hidden;padding-left:2px;border-right:1px solid #fff">08.11.2017</div>
<div class="a" style="left:1047px;top:723px;width:69px;height:18px;background:#dcfdb8;color:#111;font-size:11px;letter-spacing:-0.07px;line-height:18px;white-space:nowrap;overflow:hidden;padding-left:2px;border-right:1px solid #fff">09:20</div>
<div class="a" style="left:1116px;top:723px;width:64px;height:18px;background:#dcfdb8;color:#111;font-size:11px;letter-spacing:-0.088px;line-height:18px;white-space:nowrap;overflow:hidden;text-align:right;padding-right:2px;border-right:1px solid #fff">0,00</div>
<div class="a" style="left:1180px;top:723px;width:42px;height:18px;background:#deebfd;color:#111;font-size:11px;letter-spacing:-0.35px;line-height:18px;white-space:nowrap;overflow:hidden;padding-left:2px;border-right:1px solid #fff">km</div>
<div class="a" style="left:1222px;top:723px;width:37px;height:18px;background:#ffffff;color:#111;font-size:11px;letter-spacing:-0.088px;line-height:18px;white-space:nowrap;overflow:hidden;text-align:right;padding-right:2px;border-right:1px solid #fff">0,05</div>
<div class="a" style="left:1259px;top:723px;width:31px;height:18px;background:#deebfd;color:#111;font-size:11px;letter-spacing:-0.35px;line-height:18px;white-space:nowrap;overflow:hidden;padding-left:2px;border-right:1px solid #fff">hod</div>
<div class="a" style="left:1290px;top:723px;width:122px;height:18px;background:#dcfdb8;color:#111;font-size:11px;letter-spacing:-0.35px;line-height:18px;white-space:nowrap;overflow:hidden;padding-left:2px;border-right:1px solid #fff">Libeň,Bulovka » Libeň,Bulovka</div>
<div class="a" style="left:708px;top:741px;width:43px;height:18px;background:#f5f9fe;color:#111;font-size:11px;letter-spacing:-0.35px;line-height:18px;white-space:nowrap;overflow:hidden;padding-left:2px;border-right:1px solid #fff">ST</div>
<div class="a" style="left:751px;top:741px;width:70px;height:18px;background:#c2fb86;color:#111;font-size:11px;letter-spacing:-0.35px;line-height:18px;white-space:nowrap;overflow:hidden;padding-left:2px;border-right:1px solid #fff">Stání</div>
<div class="a" style="left:821px;top:741px;width:79px;height:18px;background:#c2fb86;color:#111;font-size:11px;letter-spacing:-0.07px;line-height:18px;white-space:nowrap;overflow:hidden;padding-left:2px;border-right:1px solid #fff">08.11.2017</div>
<div class="a" style="left:900px;top:741px;width:66px;height:18px;background:#c2fb86;color:#111;font-size:11px;letter-spacing:-0.07px;line-height:18px;white-space:nowrap;overflow:hidden;padding-left:2px;border-right:1px solid #fff">09:20</div>
<div class="a" style="left:966px;top:741px;width:81px;height:18px;background:#c2fb86;color:#111;font-size:11px;letter-spacing:-0.07px;line-height:18px;white-space:nowrap;overflow:hidden;padding-left:2px;border-right:1px solid #fff">08.11.2017</div>
<div class="a" style="left:1047px;top:741px;width:69px;height:18px;background:#c2fb86;color:#111;font-size:11px;letter-spacing:-0.07px;line-height:18px;white-space:nowrap;overflow:hidden;padding-left:2px;border-right:1px solid #fff">10:32</div>
<div class="a" style="left:1116px;top:741px;width:64px;height:18px;background:#c2fb86;color:#111;font-size:11px;letter-spacing:-0.088px;line-height:18px;white-space:nowrap;overflow:hidden;text-align:right;padding-right:2px;border-right:1px solid #fff">1,19</div>
<div class="a" style="left:1180px;top:741px;width:42px;height:18px;background:#c9dcfb;color:#111;font-size:11px;letter-spacing:-0.35px;line-height:18px;white-space:nowrap;overflow:hidden;padding-left:2px;border-right:1px solid #fff">hod</div>
<div class="a" style="left:1222px;top:741px;width:37px;height:18px;background:#c9dcfb;color:#111;font-size:11px;letter-spacing:-0.35px;line-height:18px;white-space:nowrap;overflow:hidden;text-align:right;padding-right:2px;border-right:1px solid #fff"></div>
<div class="a" style="left:1259px;top:741px;width:31px;height:18px;background:#c9dcfb;color:#111;font-size:11px;letter-spacing:-0.35px;line-height:18px;white-space:nowrap;overflow:hidden;padding-left:2px;border-right:1px solid #fff"></div>
<div class="a" style="left:1290px;top:741px;width:122px;height:18px;background:#c2fb86;color:#111;font-size:11px;letter-spacing:-0.35px;line-height:18px;white-space:nowrap;overflow:hidden;padding-left:2px;border-right:1px solid #fff">Libeň,Bulovka</div>
<div class="a" style="left:708px;top:759px;width:43px;height:18px;background:#ffffff;color:#111;font-size:11px;letter-spacing:-0.35px;line-height:18px;white-space:nowrap;overflow:hidden;padding-left:2px;border-right:1px solid #fff">J</div>
<div class="a" style="left:751px;top:759px;width:70px;height:18px;background:#dcfdb8;color:#111;font-size:11px;letter-spacing:-0.35px;line-height:18px;white-space:nowrap;overflow:hidden;padding-left:2px;border-right:1px solid #fff">Jízda služební</div>
<div class="a" style="left:821px;top:759px;width:79px;height:18px;background:#dcfdb8;color:#111;font-size:11px;letter-spacing:-0.07px;line-height:18px;white-space:nowrap;overflow:hidden;padding-left:2px;border-right:1px solid #fff">08.11.2017</div>
<div class="a" style="left:900px;top:759px;width:66px;height:18px;background:#dcfdb8;color:#111;font-size:11px;letter-spacing:-0.07px;line-height:18px;white-space:nowrap;overflow:hidden;padding-left:2px;border-right:1px solid #fff">10:32</div>
<div class="a" style="left:966px;top:759px;width:81px;height:18px;background:#dcfdb8;color:#111;font-size:11px;letter-spacing:-0.07px;line-height:18px;white-space:nowrap;overflow:hidden;padding-left:2px;border-right:1px solid #fff">08.11.2017</div>
<div class="a" style="left:1047px;top:759px;width:69px;height:18px;background:#dcfdb8;color:#111;font-size:11px;letter-spacing:-0.07px;line-height:18px;white-space:nowrap;overflow:hidden;padding-left:2px;border-right:1px solid #fff">10:32</div>
<div class="a" style="left:1116px;top:759px;width:64px;height:18px;background:#dcfdb8;color:#111;font-size:11px;letter-spacing:-0.088px;line-height:18px;white-space:nowrap;overflow:hidden;text-align:right;padding-right:2px;border-right:1px solid #fff">0,00</div>
<div class="a" style="left:1180px;top:759px;width:42px;height:18px;background:#deebfd;color:#111;font-size:11px;letter-spacing:-0.35px;line-height:18px;white-space:nowrap;overflow:hidden;padding-left:2px;border-right:1px solid #fff">km</div>
<div class="a" style="left:1222px;top:759px;width:37px;height:18px;background:#ffffff;color:#111;font-size:11px;letter-spacing:-0.088px;line-height:18px;white-space:nowrap;overflow:hidden;text-align:right;padding-right:2px;border-right:1px solid #fff">0,00</div>
<div class="a" style="left:1259px;top:759px;width:31px;height:18px;background:#deebfd;color:#111;font-size:11px;letter-spacing:-0.35px;line-height:18px;white-space:nowrap;overflow:hidden;padding-left:2px;border-right:1px solid #fff">hod</div>
<div class="a" style="left:1290px;top:759px;width:122px;height:18px;background:#dcfdb8;color:#111;font-size:11px;letter-spacing:-0.35px;line-height:18px;white-space:nowrap;overflow:hidden;padding-left:2px;border-right:1px solid #fff">Libeň,Bulovka » Libeň,Bulovka</div>
<div class="a" style="left:708px;top:777px;width:43px;height:18px;background:#f5f9fe;color:#111;font-size:11px;letter-spacing:-0.35px;line-height:18px;white-space:nowrap;overflow:hidden;padding-left:2px;border-right:1px solid #fff">ST</div>
<div class="a" style="left:751px;top:777px;width:70px;height:18px;background:#c2fb86;color:#111;font-size:11px;letter-spacing:-0.35px;line-height:18px;white-space:nowrap;overflow:hidden;padding-left:2px;border-right:1px solid #fff">Stání</div>
<div class="a" style="left:821px;top:777px;width:79px;height:18px;background:#c2fb86;color:#111;font-size:11px;letter-spacing:-0.07px;line-height:18px;white-space:nowrap;overflow:hidden;padding-left:2px;border-right:1px solid #fff">08.11.2017</div>
<div class="a" style="left:900px;top:777px;width:66px;height:18px;background:#c2fb86;color:#111;font-size:11px;letter-spacing:-0.07px;line-height:18px;white-space:nowrap;overflow:hidden;padding-left:2px;border-right:1px solid #fff">10:32</div>
<div class="a" style="left:966px;top:777px;width:81px;height:18px;background:#c2fb86;color:#111;font-size:11px;letter-spacing:-0.07px;line-height:18px;white-space:nowrap;overflow:hidden;padding-left:2px;border-right:1px solid #fff">08.11.2017</div>
<div class="a" style="left:1047px;top:777px;width:69px;height:18px;background:#c2fb86;color:#111;font-size:11px;letter-spacing:-0.07px;line-height:18px;white-space:nowrap;overflow:hidden;padding-left:2px;border-right:1px solid #fff">11:40</div>
<div class="a" style="left:1116px;top:777px;width:64px;height:18px;background:#c2fb86;color:#111;font-size:11px;letter-spacing:-0.088px;line-height:18px;white-space:nowrap;overflow:hidden;text-align:right;padding-right:2px;border-right:1px solid #fff">1,13</div>
<div class="a" style="left:1180px;top:777px;width:42px;height:18px;background:#c9dcfb;color:#111;font-size:11px;letter-spacing:-0.35px;line-height:18px;white-space:nowrap;overflow:hidden;padding-left:2px;border-right:1px solid #fff">hod</div>
<div class="a" style="left:1222px;top:777px;width:37px;height:18px;background:#c9dcfb;color:#111;font-size:11px;letter-spacing:-0.35px;line-height:18px;white-space:nowrap;overflow:hidden;text-align:right;padding-right:2px;border-right:1px solid #fff"></div>
<div class="a" style="left:1259px;top:777px;width:31px;height:18px;background:#c9dcfb;color:#111;font-size:11px;letter-spacing:-0.35px;line-height:18px;white-space:nowrap;overflow:hidden;padding-left:2px;border-right:1px solid #fff"></div>
<div class="a" style="left:1290px;top:777px;width:122px;height:18px;background:#c2fb86;color:#111;font-size:11px;letter-spacing:-0.35px;line-height:18px;white-space:nowrap;overflow:hidden;padding-left:2px;border-right:1px solid #fff">Libeň,Bulovka</div>
<div class="a" style="left:708px;top:795px;width:43px;height:18px;background:#ffffff;color:#111;font-size:11px;letter-spacing:-0.35px;line-height:18px;white-space:nowrap;overflow:hidden;padding-left:2px;border-right:1px solid #fff">J</div>
<div class="a" style="left:751px;top:795px;width:70px;height:18px;background:#dcfdb8;color:#111;font-size:11px;letter-spacing:-0.35px;line-height:18px;white-space:nowrap;overflow:hidden;padding-left:2px;border-right:1px solid #fff">Jízda služební</div>
<div class="a" style="left:821px;top:795px;width:79px;height:18px;background:#dcfdb8;color:#111;font-size:11px;letter-spacing:-0.07px;line-height:18px;white-space:nowrap;overflow:hidden;padding-left:2px;border-right:1px solid #fff">08.11.2017</div>
<div class="a" style="left:900px;top:795px;width:66px;height:18px;background:#dcfdb8;color:#111;font-size:11px;letter-spacing:-0.07px;line-height:18px;white-space:nowrap;overflow:hidden;padding-left:2px;border-right:1px solid #fff">11:40</div>
<div class="a" style="left:966px;top:795px;width:81px;height:18px;background:#dcfdb8;color:#111;font-size:11px;letter-spacing:-0.07px;line-height:18px;white-space:nowrap;overflow:hidden;padding-left:2px;border-right:1px solid #fff">08.11.2017</div>
<div class="a" style="left:1047px;top:795px;width:69px;height:18px;background:#dcfdb8;color:#111;font-size:11px;letter-spacing:-0.07px;line-height:18px;white-space:nowrap;overflow:hidden;padding-left:2px;border-right:1px solid #fff">11:41</div>
<div class="a" style="left:1116px;top:795px;width:64px;height:18px;background:#dcfdb8;color:#111;font-size:11px;letter-spacing:-0.088px;line-height:18px;white-space:nowrap;overflow:hidden;text-align:right;padding-right:2px;border-right:1px solid #fff">0,00</div>
<div class="a" style="left:1180px;top:795px;width:42px;height:18px;background:#deebfd;color:#111;font-size:11px;letter-spacing:-0.35px;line-height:18px;white-space:nowrap;overflow:hidden;padding-left:2px;border-right:1px solid #fff">km</div>
<div class="a" style="left:1222px;top:795px;width:37px;height:18px;background:#ffffff;color:#111;font-size:11px;letter-spacing:-0.088px;line-height:18px;white-space:nowrap;overflow:hidden;text-align:right;padding-right:2px;border-right:1px solid #fff">0,02</div>
<div class="a" style="left:1259px;top:795px;width:31px;height:18px;background:#deebfd;color:#111;font-size:11px;letter-spacing:-0.35px;line-height:18px;white-space:nowrap;overflow:hidden;padding-left:2px;border-right:1px solid #fff">hod</div>
<div class="a" style="left:1290px;top:795px;width:122px;height:18px;background:#dcfdb8;color:#111;font-size:11px;letter-spacing:-0.35px;line-height:18px;white-space:nowrap;overflow:hidden;padding-left:2px;border-right:1px solid #fff">Libeň,Bulovka » Libeň,Bulovka</div>
<div class="a" style="left:708px;top:813px;width:43px;height:18px;background:#f5f9fe;color:#111;font-size:11px;letter-spacing:-0.35px;line-height:18px;white-space:nowrap;overflow:hidden;padding-left:2px;border-right:1px solid #fff">ST</div>
<div class="a" style="left:751px;top:813px;width:70px;height:18px;background:#c2fb86;color:#111;font-size:11px;letter-spacing:-0.35px;line-height:18px;white-space:nowrap;overflow:hidden;padding-left:2px;border-right:1px solid #fff">Stání</div>
<div class="a" style="left:821px;top:813px;width:79px;height:18px;background:#c2fb86;color:#111;font-size:11px;letter-spacing:-0.07px;line-height:18px;white-space:nowrap;overflow:hidden;padding-left:2px;border-right:1px solid #fff">08.11.2017</div>
<div class="a" style="left:900px;top:813px;width:66px;height:18px;background:#c2fb86;color:#111;font-size:11px;letter-spacing:-0.07px;line-height:18px;white-space:nowrap;overflow:hidden;padding-left:2px;border-right:1px solid #fff">11:41</div>
<div class="a" style="left:966px;top:813px;width:81px;height:18px;background:#c2fb86;color:#111;font-size:11px;letter-spacing:-0.07px;line-height:18px;white-space:nowrap;overflow:hidden;padding-left:2px;border-right:1px solid #fff">08.11.2017</div>
<div class="a" style="left:1047px;top:813px;width:69px;height:18px;background:#c2fb86;color:#111;font-size:11px;letter-spacing:-0.07px;line-height:18px;white-space:nowrap;overflow:hidden;padding-left:2px;border-right:1px solid #fff">12:56</div>
<div class="a" style="left:1116px;top:813px;width:64px;height:18px;background:#c2fb86;color:#111;font-size:11px;letter-spacing:-0.088px;line-height:18px;white-space:nowrap;overflow:hidden;text-align:right;padding-right:2px;border-right:1px solid #fff">1,25</div>
<div class="a" style="left:1180px;top:813px;width:42px;height:18px;background:#c9dcfb;color:#111;font-size:11px;letter-spacing:-0.35px;line-height:18px;white-space:nowrap;overflow:hidden;padding-left:2px;border-right:1px solid #fff">hod</div>
<div class="a" style="left:1222px;top:813px;width:37px;height:18px;background:#c9dcfb;color:#111;font-size:11px;letter-spacing:-0.35px;line-height:18px;white-space:nowrap;overflow:hidden;text-align:right;padding-right:2px;border-right:1px solid #fff"></div>
<div class="a" style="left:1259px;top:813px;width:31px;height:18px;background:#c9dcfb;color:#111;font-size:11px;letter-spacing:-0.35px;line-height:18px;white-space:nowrap;overflow:hidden;padding-left:2px;border-right:1px solid #fff"></div>
<div class="a" style="left:1290px;top:813px;width:122px;height:18px;background:#c2fb86;color:#111;font-size:11px;letter-spacing:-0.35px;line-height:18px;white-space:nowrap;overflow:hidden;padding-left:2px;border-right:1px solid #fff">Libeň,Bulovka</div>
<div class="a" style="left:708px;top:831px;width:43px;height:18px;background:#ffffff;color:#111;font-size:11px;letter-spacing:-0.35px;line-height:18px;white-space:nowrap;overflow:hidden;padding-left:2px;border-right:1px solid #fff">J</div>
<div class="a" style="left:751px;top:831px;width:70px;height:18px;background:#dcfdb8;color:#111;font-size:11px;letter-spacing:-0.35px;line-height:18px;white-space:nowrap;overflow:hidden;padding-left:2px;border-right:1px solid #fff">Jízda služební</div>
<div class="a" style="left:821px;top:831px;width:79px;height:18px;background:#dcfdb8;color:#111;font-size:11px;letter-spacing:-0.07px;line-height:18px;white-space:nowrap;overflow:hidden;padding-left:2px;border-right:1px solid #fff">08.11.2017</div>
<div class="a" style="left:900px;top:831px;width:66px;height:18px;background:#dcfdb8;color:#111;font-size:11px;letter-spacing:-0.07px;line-height:18px;white-space:nowrap;overflow:hidden;padding-left:2px;border-right:1px solid #fff">12:56</div>
<div class="a" style="left:966px;top:831px;width:81px;height:18px;background:#dcfdb8;color:#111;font-size:11px;letter-spacing:-0.07px;line-height:18px;white-space:nowrap;overflow:hidden;padding-left:2px;border-right:1px solid #fff">08.11.2017</div>
<div class="a" style="left:1047px;top:831px;width:69px;height:18px;background:#dcfdb8;color:#111;font-size:11px;letter-spacing:-0.07px;line-height:18px;white-space:nowrap;overflow:hidden;padding-left:2px;border-right:1px solid #fff">14:08</div>
<div class="a" style="left:1116px;top:831px;width:64px;height:18px;background:#dcfdb8;color:#111;font-size:11px;letter-spacing:-0.058px;line-height:18px;white-space:nowrap;overflow:hidden;text-align:right;padding-right:2px;border-right:1px solid #fff">100,00</div>
<div class="a" style="left:1180px;top:831px;width:42px;height:18px;background:#deebfd;color:#111;font-size:11px;letter-spacing:-0.35px;line-height:18px;white-space:nowrap;overflow:hidden;padding-left:2px;border-right:1px solid #fff">km</div>
<div class="a" style="left:1222px;top:831px;width:37px;height:18px;background:#ffffff;color:#111;font-size:11px;letter-spacing:-0.088px;line-height:18px;white-space:nowrap;overflow:hidden;text-align:right;padding-right:2px;border-right:1px solid #fff">1,19</div>
<div class="a" style="left:1259px;top:831px;width:31px;height:18px;background:#deebfd;color:#111;font-size:11px;letter-spacing:-0.35px;line-height:18px;white-space:nowrap;overflow:hidden;padding-left:2px;border-right:1px solid #fff">hod</div>
<div class="a" style="left:1290px;top:831px;width:122px;height:18px;background:#dcfdb8;color:#111;font-size:11px;letter-spacing:-0.35px;line-height:18px;white-space:nowrap;overflow:hidden;padding-left:2px;border-right:1px solid #fff">Libeň,Bulovka » Liberec,Český</div>
<div class="a" style="left:708px;top:651px;width:43px;height:18px;border:2px solid #e01b22"></div>
<div class="a" style="left:1412px;top:615px;width:16px;height:266px;background:#f4f8fc"></div>
<svg style="left:1416px;top:620px" width="9" height="6"><path d="M0.5 5 L4.5 1 L8.5 5" fill="none" stroke="#222" stroke-width="1.4"/></svg>
<div class="a" style="left:1412px;top:632px;width:16px;height:81px;background:#d9e6f3"></div>
<svg style="left:1416px;top:853px" width="9" height="6"><path d="M0.5 1 L4.5 5 L8.5 1" fill="none" stroke="#222" stroke-width="1.4"/></svg>
<div class="a" style="left:708px;top:864px;width:704px;height:17px;background:#f4f8fc"></div>
<div class="a" style="left:725px;top:865px;width:17px;height:15px;background:#d9e6f3"></div>
<svg style="left:713px;top:868px" width="6" height="9"><path d="M5 0.5 L1 4.5 L5 8.5" fill="none" stroke="#222" stroke-width="1.4"/></svg>
<svg style="left:1401px;top:868px" width="6" height="9"><path d="M1 0.5 L5 4.5 L1 8.5" fill="none" stroke="#222" stroke-width="1.4"/></svg>
<div class="t" style="left:693.5px;top:906px;font-size:11px;letter-spacing:-0.35px;color:#1a1a1a">Počáteční stav</div>
<div class="a" style="left:695px;top:924px;width:98px;height:19px;background:#dfe9fb;border:1px solid #cfdcf6;padding-right:2px;text-align:right;font-size:11px;letter-spacing:-0.05px;font-weight:normal;line-height:17px;white-space:nowrap;overflow:hidden;color:#111">120 981</div>
<div class="t" style="left:801.5px;top:906px;font-size:11px;letter-spacing:-0.35px;color:#1a1a1a">Konečný stav cílový</div>
<div class="a" style="left:803px;top:924px;width:98px;height:19px;background:#fff;border:1px solid #c9d9f3;padding-right:2px;text-align:right;font-size:11px;letter-spacing:-0.078px;font-weight:normal;line-height:17px;white-space:nowrap;overflow:hidden;color:#111">121 389,0</div>
<div class="t" style="left:1013px;top:906px;font-size:11px;letter-spacing:-0.35px;color:#1a1a1a">Počáteční stav PHm</div>
<div class="a" style="left:1015px;top:924px;width:98px;height:19px;background:#dfe9fb;border:1px solid #cfdcf6;padding-right:2px;text-align:right;font-size:11px;letter-spacing:-0.07px;font-weight:normal;line-height:17px;white-space:nowrap;overflow:hidden;color:#111">23,00</div>
<div class="t" style="left:1121px;top:906px;font-size:11px;letter-spacing:-0.35px;color:#1a1a1a">Čerpání PHm</div>
<div class="a" style="left:1123px;top:924px;width:98px;height:19px;background:#dfe9fb;border:1px solid #cfdcf6;padding-right:2px;text-align:right;font-size:11px;letter-spacing:-0.07px;font-weight:normal;line-height:17px;white-space:nowrap;overflow:hidden;color:#111">35,00</div>
<div class="t" style="left:1245px;top:906px;font-size:11px;letter-spacing:-0.35px;color:#1a1a1a">Vykázaný čas</div>
<div class="a" style="left:1247px;top:924px;width:98px;height:19px;background:#dfe9fb;border:1px solid #cfdcf6;padding-right:2px;text-align:right;font-size:11px;letter-spacing:-0.088px;font-weight:normal;line-height:17px;white-space:nowrap;overflow:hidden;color:#111">5,71</div>
<div class="t" style="left:693.5px;top:950px;font-size:11px;letter-spacing:-0.35px;color:#1a1a1a">Vykázáno</div>
<div class="a" style="left:695px;top:968px;width:98px;height:19px;background:#dfe9fb;border:1px solid #cfdcf6;padding-right:2px;text-align:right;font-size:11px;letter-spacing:-0.0px;font-weight:normal;line-height:17px;white-space:nowrap;overflow:hidden;color:#111">408</div>
<div class="t" style="left:801.5px;top:950px;font-size:11px;letter-spacing:-0.35px;color:#1a1a1a">Průběžný stav</div>
<div class="a" style="left:803px;top:968px;width:98px;height:19px;background:#dfe9fb;border:1px solid #cfdcf6;padding-right:2px;text-align:right;font-size:11px;letter-spacing:-0.05px;font-weight:normal;line-height:17px;white-space:nowrap;overflow:hidden;color:#111">121 389</div>
<div class="t" style="left:909.5px;top:950px;font-size:11px;letter-spacing:-0.35px;color:#1a1a1a">Zbývá vykázat</div>
<div class="a" style="left:911px;top:968px;width:78px;height:19px;background:#dfe9fb;border:1px solid #cfdcf6;padding-right:2px;text-align:right;font-size:11.5px;letter-spacing:0.45px;font-weight:bold;line-height:17px;white-space:nowrap;overflow:hidden;color:#888">0</div>
<div class="t" style="left:1013px;top:950px;font-size:11px;letter-spacing:-0.35px;color:#1a1a1a">Spotřeba PHm</div>
<div class="a" style="left:1015px;top:968px;width:98px;height:19px;background:#dfe9fb;border:1px solid #cfdcf6;padding-right:2px;text-align:right;font-size:11px;letter-spacing:-0.07px;font-weight:normal;line-height:17px;white-space:nowrap;overflow:hidden;color:#111">24,57</div>
<div class="t" style="left:1121px;top:950px;font-size:11px;letter-spacing:-0.35px;color:#1a1a1a">Konečný stav PHm</div>
<div class="a" style="left:1123px;top:968px;width:98px;height:19px;background:#dfe9fb;border:1px solid #cfdcf6;padding-right:2px;text-align:right;font-size:11px;letter-spacing:-0.07px;font-weight:normal;line-height:17px;white-space:nowrap;overflow:hidden;color:#111">33,43</div>
<div class="t" style="left:1245px;top:950px;font-size:11px;letter-spacing:-0.35px;color:#1a1a1a">Doba provozu</div>
<div class="a" style="left:1247px;top:968px;width:98px;height:19px;background:#dfe9fb;border:1px solid #cfdcf6;padding-right:2px;text-align:right;font-size:11px;letter-spacing:-0.35px;font-weight:normal;line-height:17px;white-space:nowrap;overflow:hidden;color:#111"></div></body></html>
